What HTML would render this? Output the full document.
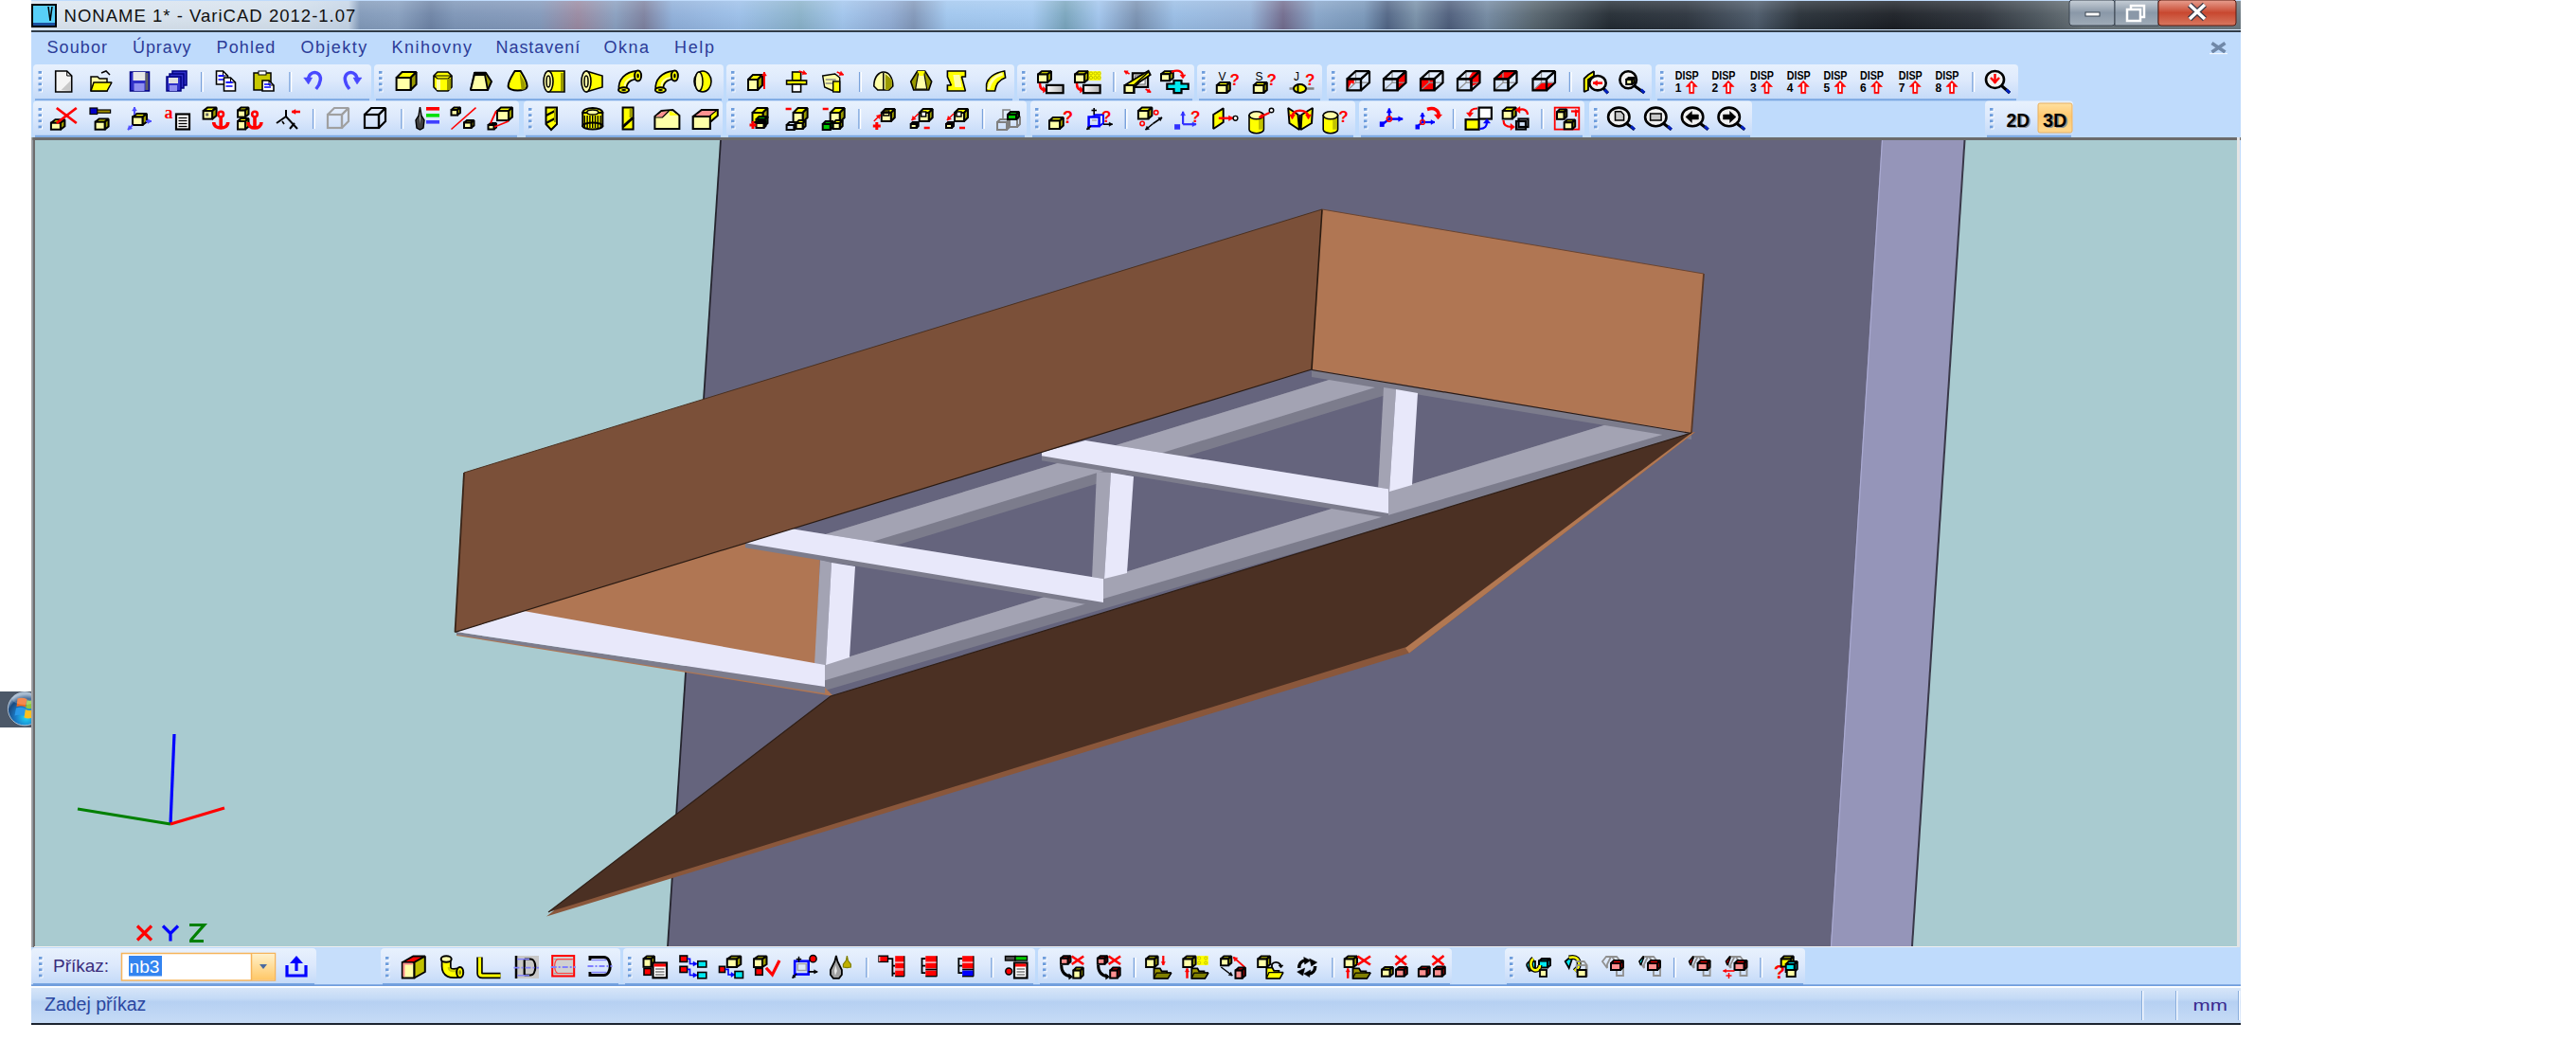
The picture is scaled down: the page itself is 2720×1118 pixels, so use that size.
<!DOCTYPE html>
<html><head><meta charset="utf-8">
<style>
html,body{margin:0;padding:0;width:2720px;height:1118px;overflow:hidden;background:#fff;font-family:"Liberation Sans",sans-serif;}
.abs{position:absolute;}
#win{position:absolute;left:33px;top:0;width:2333px;height:1082px;background:#bfdbfc;}
#title{position:absolute;left:33px;top:1px;width:2333px;height:30px;
background:linear-gradient(90deg,#dce6f0 0px,#d4e0ec 267px,#c4d4e6 335px,#8098b8 347px,#869ebe 387px,#6c82a4 422px,#7c94b6 447px,#8298ba 537px,#9888a0 577px,#889ebe 617px,#7c809e 647px,#8eaed8 677px,#9abee8 747px,#88b0c8 812px,#a0c4ec 857px,#90acd4 907px,#8096b8 932px,#a0c6ee 967px,#a2c8f0 1057px,#78a4bc 1092px,#a0c4ec 1127px,#7890b0 1167px,#98bce4 1207px,#94b2d8 1287px,#706a8c 1322px,#86a4c8 1357px,#7896b8 1407px,#506484 1432px,#7890a8 1462px,#4c5c7a 1497px,#7288a0 1537px,#56646e 1587px,#222a32 1667px,#2a323c 1747px,#4a5868 1822px,#262e36 1867px,#1a1e24 1967px,#2a3038 2057px,#48525a 2117px,#687278 2167px,#6a7880 2333px);}
#tline{position:absolute;left:33px;top:32px;width:2333px;height:2px;background:#303c48;}
#ttop{position:absolute;left:33px;top:1px;width:2333px;height:30px;background:linear-gradient(180deg,rgba(255,255,255,0.18) 0%,rgba(255,255,255,0.05) 45%,rgba(0,0,0,0.04) 100%);}
#tlight{position:absolute;left:33px;top:31px;width:2333px;height:1px;background:rgba(230,240,250,0.55);}
.t{position:absolute;white-space:pre;line-height:1;}
.menu{font-size:18px;color:#2c3c98;top:41px;}
</style></head><body>

<div id="win"></div>
<div id="title"></div><div id="ttop"></div><div id="tlight"></div><div id="tline"></div>
<svg class="abs" style="left:0;top:0" width="2720" height="1118" viewBox="0 0 2720 1118">
<defs><clipPath id="vp"><rect x="37" y="148" width="2325" height="851"/></clipPath></defs>
<rect x="33" y="145" width="2333" height="3" fill="#6b6b6b"/>
<rect x="33" y="145" width="1.6" height="856" fill="#a4a4a4"/><rect x="34.6" y="145" width="2.4" height="856" fill="#6c6c6c"/>
<rect x="2362" y="145" width="3" height="856" fill="#e4e4e4"/>
<g clip-path="url(#vp)">
<rect x="0" y="0" width="2720" height="1118" fill="#a9cbd0"/>
<polygon points="761,148 2000,148 1950,999 705,999" fill="#65647d" />
<line x1="761" y1="148" x2="705" y2="999" stroke="#25242e" stroke-width="1.8"/>
<polygon points="1987,148 2074.5,148 2019,999 1933,999" fill="#9595b9" />
<line x1="1987.5" y1="148" x2="1933.5" y2="999" stroke="#aaaad2" stroke-width="1.2"/>
<line x1="2074.5" y1="148" x2="2019" y2="999" stroke="#393848" stroke-width="2"/>
<polygon points="482,667 836,558 866,587 861,702 871,712" fill="#b07653" />
<polygon points="866,565.866 1470,380.619 1470,415.119 866,600.366" fill="#7c7c8c" />
<polygon points="866,565.866 1470,380.619 1470,403.619 866,588.866" fill="#a3a3b3" />
<polygon points="871,701.17 1786,420.539 1786,461 871,729" fill="#7c7c8c" />
<polygon points="871,701.17 1786,420.539 1786,450 871,718.17" fill="#a3a3b3" />
<polygon points="1385,390 1786,457 1786,464 1385,398" fill="#7c7c8c" />
<polygon points="1396,221 1799,289 1786,457 1385,390" fill="#b07653" />
<polyline points="1799,289 1786,457" fill="none" stroke="#5a3826" stroke-width="1.8"/>
<polyline points="1385,390.5 1786,457.5" fill="none" stroke="#2a1a14" stroke-width="1.2"/>
<polygon points="866,591 878,594 872,702 860,702" fill="#a3a3b3" />
<polygon points="878,594 903,598 897,694 872,702" fill="#e8e8fa" />
<polygon points="1158,498 1173,499 1166,611 1153,611" fill="#a3a3b3" />
<polygon points="1173,499 1197,503 1190,605 1166,611" fill="#e8e8fa" />
<polygon points="1461,409 1474,411 1467,519 1455,518" fill="#a3a3b3" />
<polygon points="1474,411 1497,415 1491,512 1467,519" fill="#e8e8fa" />
<polygon points="787,573.396 836,558.36 1165,611 1165,640.95 787,578.202" fill="#7c7c8c" />
<polygon points="787,573.396 836,558.36 1165,611 1165,635.95 787,573.202" fill="#e8e8fa" />
<polygon points="1100,477.399 1146,465 1466,516.2 1466,547.12 1100,486.364" fill="#7c7c8c" />
<polygon points="1100,477.399 1146,465 1466,516.2 1466,542.12 1100,481.364" fill="#e8e8fa" />
<polygon points="482,668 871,726 880,735 482,671" fill="#b07653" />
<polygon points="482,667 871,725 871,732 482,670" fill="#7c7c8c" />
<polygon points="482,667 553,645 871,702 871,725" fill="#e8e8fa" />
<polygon points="577,967.5 877,735 1790,456 1488,689.5" fill="#8a573b" />
<polygon points="1484,684 1786,457 1790,456 1488,689.5" fill="#b27852" />
<polygon points="579,963 877,735 1786,457 1485,683" fill="#4b3023" />
<polyline points="579,963 877,735 1786,457" fill="none" stroke="#2e1e16" stroke-width="1.2"/>
<polygon points="490,499 1396,221 1385,390 480.5,667.4" fill="#7b5039" />
<polyline points="490,499 480.5,667.4" fill="none" stroke="#3a2418" stroke-width="1.8"/>
<polyline points="1396,221 1385,390" fill="none" stroke="#2a1a10" stroke-width="1.6"/>
<polyline points="490,499 1396,221" fill="none" stroke="#4a3020" stroke-width="1"/>
<polyline points="480.5,667.4 1385,390" fill="none" stroke="#2a1a12" stroke-width="1.2"/>
<polyline points="1396,221 1799,289" fill="none" stroke="#6a4430" stroke-width="1"/>
<polyline points="180,870 184,775" stroke="#0000ff" stroke-width="3.2" fill="none"/>
<polyline points="180,870 82,854" stroke="#008000" stroke-width="3.2" fill="none"/>
<polyline points="180,870 237,853" stroke="#ff0000" stroke-width="3" fill="none"/>
</g>
<rect x="36" y="999" width="2326" height="1.5" fill="#f0f0f0"/>
<defs><linearGradient id="tbgrad" x1="0" y1="0" x2="0" y2="1"><stop offset="0" stop-color="#e8f1fd"/><stop offset="0.45" stop-color="#dde9fc"/><stop offset="1" stop-color="#c2d9f8"/></linearGradient><linearGradient id="stgrad" x1="0" y1="0" x2="0" y2="1"><stop offset="0" stop-color="#d6e5f8"/><stop offset="0.3" stop-color="#c4daf6"/><stop offset="0.4" stop-color="#b6d0f2"/><stop offset="1" stop-color="#c6dbf6"/></linearGradient><linearGradient id="btn3d" x1="0" y1="0" x2="0" y2="1"><stop offset="0" stop-color="#ffe0a0"/><stop offset="0.45" stop-color="#ffc870"/><stop offset="1" stop-color="#ffd890"/></linearGradient><linearGradient id="ddgrad" x1="0" y1="0" x2="0" y2="1"><stop offset="0" stop-color="#fff0c8"/><stop offset="1" stop-color="#ffc868"/></linearGradient><radialGradient id="orb" cx="0.55" cy="0.75" r="0.7"><stop offset="0" stop-color="#20d8f8"/><stop offset="0.45" stop-color="#1a7cc8"/><stop offset="0.8" stop-color="#1a4a80"/><stop offset="1" stop-color="#9ab0c8"/></radialGradient><linearGradient id="closebtn" x1="0" y1="0" x2="0" y2="1"><stop offset="0" stop-color="#e8a090"/><stop offset="0.5" stop-color="#c84830"/><stop offset="1" stop-color="#d87860"/></linearGradient><linearGradient id="minbtn" x1="0" y1="0" x2="0" y2="1"><stop offset="0" stop-color="#c8d0d8"/><stop offset="0.5" stop-color="#8a98a8"/><stop offset="1" stop-color="#a0acb8"/></linearGradient></defs>
<rect x="35" y="68" width="357" height="38.3" rx="4" fill="url(#tbgrad)"/><rect x="37" y="104.3" width="353" height="2" fill="#78a6e2"/><rect x="41.5" y="76" width="3.5" height="2.8" fill="#ffffff"/><rect x="40.5" y="75" width="3.5" height="2.8" fill="#6e9ddc"/><rect x="41.5" y="82.2" width="3.5" height="2.8" fill="#ffffff"/><rect x="40.5" y="81.2" width="3.5" height="2.8" fill="#6e9ddc"/><rect x="41.5" y="88.4" width="3.5" height="2.8" fill="#ffffff"/><rect x="40.5" y="87.4" width="3.5" height="2.8" fill="#6e9ddc"/><rect x="41.5" y="94.6" width="3.5" height="2.8" fill="#ffffff"/><rect x="40.5" y="93.6" width="3.5" height="2.8" fill="#6e9ddc"/><g transform="translate(55.7,74)"><polygon points="3,1 15,1 20,6 20,23 3,23" fill="#f4f4f4" stroke="#000" stroke-width="1.6" stroke-linejoin="miter" stroke-miterlimit="1.5" /><polyline points="15,1 15,6 20,6" fill="none" stroke="#000" stroke-width="1"/><polygon points="9,21 19,11 19,22" fill="#c8c8c8" stroke="none" stroke-width="0" stroke-linejoin="miter" stroke-miterlimit="1.5" /></g><g transform="translate(95,74)"><polygon points="1,7 8,7 10,9 18,9 18,22 1,22" fill="#ffffa8" stroke="#000" stroke-width="1.5" stroke-linejoin="miter" stroke-miterlimit="1.5" /><polygon points="4,13 23,13 18,22 1,22" fill="#ffff00" stroke="#000" stroke-width="1.5" stroke-linejoin="miter" stroke-miterlimit="1.5" /><polyline points="12,3 17,1 21,5" fill="none" stroke="#000" stroke-width="1.5"/></g><g transform="translate(135.5,74)"><rect x="2" y="2" width="20" height="20" fill="#3030c8" stroke="#000080" stroke-width="1.5"/><rect x="5" y="2" width="13" height="9" fill="#e8e8e8" stroke="none" stroke-width="0"/><rect x="6" y="14" width="11" height="8" fill="#9090f0" stroke="none" stroke-width="0"/><rect x="18" y="3" width="3" height="18" fill="#606060" stroke="none" stroke-width="0"/></g><g transform="translate(174,74)"><rect x="8" y="1" width="15" height="15" fill="#3030c8" stroke="#000080" stroke-width="1.5"/><rect x="5" y="4" width="15" height="15" fill="#3030c8" stroke="#000080" stroke-width="1.5"/><rect x="2" y="7" width="15" height="15" fill="#3030c8" stroke="#000080" stroke-width="1.5"/><rect x="4" y="8" width="10" height="6" fill="#e0e0e0" stroke="none" stroke-width="0"/><rect x="5" y="16" width="8" height="6" fill="#9090f0" stroke="none" stroke-width="0"/></g><rect x="211.95" y="76" width="1.5" height="21" fill="#7aa2dc"/><rect x="213.45" y="76" width="1.5" height="21" fill="#ffffff"/><g transform="translate(226.5,74)"><polygon points="2,1 9,1 14,6 14,15 2,15" fill="#fff" stroke="#000" stroke-width="1.6" stroke-linejoin="miter" stroke-miterlimit="1.5" /><polyline points="9,1 9,6 14,6" fill="none" stroke="#000" stroke-width="1"/><polyline points="4,6 10,6" fill="none" stroke="#0000ff" stroke-width="2"/><polyline points="4,10 10,10" fill="none" stroke="#0000ff" stroke-width="1.5"/><polygon points="10,8 17,8 22,13 22,22 10,22" fill="#fff" stroke="#000" stroke-width="1.6" stroke-linejoin="miter" stroke-miterlimit="1.5" /><polyline points="17,8 17,13 22,13" fill="none" stroke="#000" stroke-width="1"/><polyline points="12,13 19,13" fill="none" stroke="#0000ff" stroke-width="2"/><polyline points="12,17 19,17" fill="none" stroke="#0000ff" stroke-width="1.5"/></g><g transform="translate(266,74)"><rect x="2" y="3" width="18" height="18" fill="#c8c800" stroke="#000" stroke-width="1.5"/><rect x="7" y="1" width="8" height="4" fill="#fff" stroke="#000" stroke-width="1"/><polygon points="11,11 18,11 23,16 23,22 11,22" fill="#fff" stroke="#000" stroke-width="1.6" stroke-linejoin="miter" stroke-miterlimit="1.5" /><polyline points="18,11 18,16 23,16" fill="none" stroke="#000" stroke-width="1"/><polyline points="13,15 20,15" fill="none" stroke="#0000ff" stroke-width="1.5"/><polyline points="13,18 20,18" fill="none" stroke="#0000ff" stroke-width="1.5"/></g><rect x="305.25" y="76" width="1.5" height="21" fill="#7aa2dc"/><rect x="306.75" y="76" width="1.5" height="21" fill="#ffffff"/><g transform="translate(319.7,74)"><path d="M7 12 C4 6 10 1 15 3 C21 6 19 14 14 20" fill="none" stroke="#4848ff" stroke-width="3.5"/><polygon points="1,8 10,8 6,15" fill="#4848ff" stroke="#4848ff" stroke-width="0.5" stroke-linejoin="miter" stroke-miterlimit="1.5" /></g><g transform="translate(359,74)"><path d="M17 12 C20 6 14 1 9 3 C3 6 5 14 10 20" fill="none" stroke="#4848ff" stroke-width="3.5"/><polygon points="23,8 14,8 18,15" fill="#4848ff" stroke="#4848ff" stroke-width="0.5" stroke-linejoin="miter" stroke-miterlimit="1.5" /></g><rect x="395" y="68" width="369" height="38.3" rx="4" fill="url(#tbgrad)"/><rect x="397" y="104.3" width="365" height="2" fill="#78a6e2"/><rect x="401" y="76" width="3.5" height="2.8" fill="#ffffff"/><rect x="400" y="75" width="3.5" height="2.8" fill="#6e9ddc"/><rect x="401" y="82.2" width="3.5" height="2.8" fill="#ffffff"/><rect x="400" y="81.2" width="3.5" height="2.8" fill="#6e9ddc"/><rect x="401" y="88.4" width="3.5" height="2.8" fill="#ffffff"/><rect x="400" y="87.4" width="3.5" height="2.8" fill="#6e9ddc"/><rect x="401" y="94.6" width="3.5" height="2.8" fill="#ffffff"/><rect x="400" y="93.6" width="3.5" height="2.8" fill="#6e9ddc"/><g transform="translate(416.6,74)"><polygon points="2,8 8,2 23,2 17,8" fill="#ffff00" stroke="#000" stroke-width="2" stroke-linejoin="miter" stroke-miterlimit="1.5" /><polygon points="17,8 23,2 23,15 17,21" fill="#9a9a00" stroke="#000" stroke-width="2" stroke-linejoin="miter" stroke-miterlimit="1.5" /><rect x="2" y="8" width="15" height="13" fill="#ffffa8" stroke="#000" stroke-width="2"/></g><g transform="translate(456,74)"><polygon points="2,6 6,2 17,2 21,6 21,18 17,22 6,22 2,18" fill="#ffff00" stroke="#000" stroke-width="1.6" stroke-linejoin="miter" stroke-miterlimit="1.5" /><polygon points="2,6 6,9 17,9 21,6" fill="#ffff00" stroke="#000" stroke-width="1.2" stroke-linejoin="miter" stroke-miterlimit="1.5" /><rect x="5" y="10" width="4" height="11" fill="#ffffa8" stroke="none" stroke-width="0"/><rect x="16" y="9" width="4" height="12" fill="#9a9a00" stroke="none" stroke-width="0"/></g><g transform="translate(496,74)"><polygon points="1,21 5,3 17,3 23,12 19,21" fill="#9a9a00" stroke="#000" stroke-width="2" stroke-linejoin="miter" stroke-miterlimit="1.5" /><polygon points="1,21 5,5 16,5 19,21" fill="#ffffa8" stroke="#000" stroke-width="1.8" stroke-linejoin="miter" stroke-miterlimit="1.5" /><polyline points="5,3 17,3" fill="none" stroke="#000" stroke-width="2.5"/></g><g transform="translate(534.6,74)"><path d="M9 1 L15 1 C18 6 22 12 22 17 C22 23 2 23 2 17 C2 12 6 6 9 1 Z" fill="#ffff00" stroke="#000" stroke-width="2"/><polygon points="14,3 20,14 20,20 16,21" fill="#9a9a00" stroke="none" stroke-width="0" stroke-linejoin="miter" stroke-miterlimit="1.5" /></g><g transform="translate(573,74)"><polygon points="6,1 23,1 23,23 6,23" fill="#ffff00" stroke="#000" stroke-width="1.6" stroke-linejoin="miter" stroke-miterlimit="1.5" /><ellipse cx="6" cy="12" rx="5" ry="11" fill="#ffffa8" stroke="#000" stroke-width="1.6"/><ellipse cx="6" cy="12" rx="2" ry="6" fill="none" stroke="#000" stroke-width="1.5"/><rect x="19" y="3" width="3" height="19" fill="#9a9a00" stroke="none" stroke-width="0"/></g><g transform="translate(613,74)"><polygon points="6,1 23,6 23,18 6,23" fill="#ffff00" stroke="#000" stroke-width="1.6" stroke-linejoin="miter" stroke-miterlimit="1.5" /><ellipse cx="6" cy="12" rx="5" ry="11" fill="#ffffa8" stroke="#000" stroke-width="1.6"/><ellipse cx="6" cy="12" rx="2" ry="6" fill="none" stroke="#000" stroke-width="1.5"/></g><g transform="translate(652.6,74)"><path d="M5 21 C4 12 10 6 20 5" fill="none" stroke="#000" stroke-width="10"/><path d="M5 21 C4 12 10 6 20 5" fill="none" stroke="#ffff00" stroke-width="6.5"/><path d="M7 17 C7 12 11 9 17 8" fill="none" stroke="#ffffa8" stroke-width="2"/><ellipse cx="21" cy="6" rx="3.5" ry="5.5" fill="#ffff00" stroke="#000" stroke-width="2"/><ellipse cx="21" cy="6" rx="1.2" ry="2.5" fill="#000"/><ellipse cx="6" cy="21" rx="5.5" ry="2.8" fill="#ffff00" stroke="#000" stroke-width="2"/><ellipse cx="6" cy="21" rx="2.5" ry="1" fill="#000"/></g><g transform="translate(691.4,74)"><path d="M5 21 C4 12 10 6 20 5" fill="none" stroke="#000" stroke-width="10"/><path d="M5 21 C4 12 10 6 20 5" fill="none" stroke="#ffff00" stroke-width="6.5"/><path d="M7 17 C7 12 11 9 17 8" fill="none" stroke="#ffffa8" stroke-width="2"/><ellipse cx="21" cy="6" rx="3.5" ry="5.5" fill="#ffff00" stroke="#000" stroke-width="2"/><ellipse cx="21" cy="6" rx="1.2" ry="2.5" fill="#000"/><ellipse cx="6" cy="21" rx="5.5" ry="2.8" fill="#ffff00" stroke="#000" stroke-width="2"/><ellipse cx="6" cy="21" rx="2.5" ry="1" fill="#000"/></g><g transform="translate(730,74)"><ellipse cx="12" cy="12" rx="9" ry="11" fill="#ffff00" stroke="#000" stroke-width="1.6"/><ellipse cx="8" cy="12" rx="4" ry="10" fill="#ffffa8" stroke="#000" stroke-width="1.5"/></g><rect x="767" y="68" width="304" height="38.3" rx="4" fill="url(#tbgrad)"/><rect x="769" y="104.3" width="300" height="2" fill="#78a6e2"/><rect x="773" y="76" width="3.5" height="2.8" fill="#ffffff"/><rect x="772" y="75" width="3.5" height="2.8" fill="#6e9ddc"/><rect x="773" y="82.2" width="3.5" height="2.8" fill="#ffffff"/><rect x="772" y="81.2" width="3.5" height="2.8" fill="#6e9ddc"/><rect x="773" y="88.4" width="3.5" height="2.8" fill="#ffffff"/><rect x="772" y="87.4" width="3.5" height="2.8" fill="#6e9ddc"/><rect x="773" y="94.6" width="3.5" height="2.8" fill="#ffffff"/><rect x="772" y="93.6" width="3.5" height="2.8" fill="#6e9ddc"/><g transform="translate(788,74)"><polygon points="2,10 7,5 17,5 12,10" fill="#ffff00" stroke="#000" stroke-width="2" stroke-linejoin="miter" stroke-miterlimit="1.5" /><polygon points="12,10 17,5 17,16 12,21" fill="#9a9a00" stroke="#000" stroke-width="2" stroke-linejoin="miter" stroke-miterlimit="1.5" /><rect x="2" y="10" width="10" height="11" fill="#ffffa8" stroke="#000" stroke-width="2"/><polyline points="19,20 19,2" fill="none" stroke="#ff0000" stroke-width="2"/><polygon points="19,2 16.6,6 21.4,6" fill="#ff0000" stroke="#ff0000" stroke-width="0.5" stroke-linejoin="miter" stroke-miterlimit="1.5" /></g><g transform="translate(828.6,74)"><rect x="8" y="2" width="9" height="9" fill="#ffff00" stroke="#000" stroke-width="1.6"/><rect x="2" y="11" width="21" height="4" fill="#ffff00" stroke="#000" stroke-width="1.6"/><rect x="8" y="15" width="9" height="8" fill="#fff" stroke="#000" stroke-width="1.6"/><polyline points="15,1 23,4" fill="none" stroke="#ff0000" stroke-width="1.5"/><polygon points="23,4 20.0974,0.348316 18.412,4.8427" fill="#ff0000" stroke="#ff0000" stroke-width="0.5" stroke-linejoin="miter" stroke-miterlimit="1.5" /></g><g transform="translate(867.7,74)"><polygon points="1,6 14,4 19,8 19,23 12,22 3,18" fill="#ffffa8" stroke="#000" stroke-width="1.4" stroke-linejoin="miter" stroke-miterlimit="1.5" /><polyline points="4,10 15,10" fill="none" stroke="#888" stroke-width="1.5"/><polyline points="4,14 15,14" fill="none" stroke="#888" stroke-width="1.5"/><rect x="12" y="12" width="7" height="11" fill="#ffff00" stroke="#000" stroke-width="1.4"/><polyline points="16,2 23,5" fill="none" stroke="#ff0000" stroke-width="1.5"/><polygon points="23,5 20.2688,1.21837 18.378,5.63027" fill="#ff0000" stroke="#ff0000" stroke-width="0.5" stroke-linejoin="miter" stroke-miterlimit="1.5" /></g><rect x="906.95" y="76" width="1.5" height="21" fill="#7aa2dc"/><rect x="908.45" y="76" width="1.5" height="21" fill="#ffffff"/><g transform="translate(920.8,74)"><path d="M2 17 C2 6 8 2 12 2 C18 2 22 8 22 17 L18 21 L6 21 Z" fill="#ffffa8" stroke="#000" stroke-width="1.6"/><polyline points="12,3 12,21" fill="none" stroke="#000" stroke-width="1.5"/><polygon points="14,4 21,10 21,17 17,21 14,21" fill="#9a9a00" stroke="none" stroke-width="0" stroke-linejoin="miter" stroke-miterlimit="1.5" /></g><g transform="translate(960.7,74)"><polygon points="8,1 16,1 23,12 20,21 4,21 1,12" fill="#9a9a00" stroke="#000" stroke-width="1.6" stroke-linejoin="miter" stroke-miterlimit="1.5" /><polygon points="9,3 15,3 18,20 6,20" fill="#ffffa8" stroke="#000" stroke-width="1.2" stroke-linejoin="miter" stroke-miterlimit="1.5" /><polygon points="8,1 16,1 14,6 10,6" fill="#ffff00" stroke="none" stroke-width="0" stroke-linejoin="miter" stroke-miterlimit="1.5" /></g><g transform="translate(998.4,74)"><polygon points="2,1 21,1 21,7 17,7 21,22 2,22 2,16 6,16 2,7" fill="#ffff00" stroke="#000" stroke-width="1.6" stroke-linejoin="miter" stroke-miterlimit="1.5" /><polygon points="8,5 15,5 17,18 10,18" fill="#ffffa8" stroke="none" stroke-width="0" stroke-linejoin="miter" stroke-miterlimit="1.5" /></g><g transform="translate(1039.6,74)"><path d="M2 22 L2 15 C4 7 10 3 21 1 L22 8 C16 10 12 14 11 22 Z" fill="#ffff00" stroke="#000" stroke-width="1.6"/><path d="M4 20 C6 11 12 6 19 4" fill="none" stroke="#ffffa8" stroke-width="3"/></g><rect x="1074" y="68" width="187" height="38.3" rx="4" fill="url(#tbgrad)"/><rect x="1076" y="104.3" width="183" height="2" fill="#78a6e2"/><rect x="1080" y="76" width="3.5" height="2.8" fill="#ffffff"/><rect x="1079" y="75" width="3.5" height="2.8" fill="#6e9ddc"/><rect x="1080" y="82.2" width="3.5" height="2.8" fill="#ffffff"/><rect x="1079" y="81.2" width="3.5" height="2.8" fill="#6e9ddc"/><rect x="1080" y="88.4" width="3.5" height="2.8" fill="#ffffff"/><rect x="1079" y="87.4" width="3.5" height="2.8" fill="#6e9ddc"/><rect x="1080" y="94.6" width="3.5" height="2.8" fill="#ffffff"/><rect x="1079" y="93.6" width="3.5" height="2.8" fill="#6e9ddc"/><g transform="translate(1097,74)"><polygon points="-1,4.5 3,1.2 13,1.2 9,4.5" fill="#ffff00" stroke="#000" stroke-width="2" stroke-linejoin="miter" stroke-miterlimit="1.5" /><polygon points="9,4.5 13,1.2 13,9.7 9,13" fill="#9a9a00" stroke="#000" stroke-width="2" stroke-linejoin="miter" stroke-miterlimit="1.5" /><rect x="-1" y="4.5" width="10" height="8.5" fill="#ffffa8" stroke="#000" stroke-width="2"/><path d="M1 14 C1 19 3 21 6 21" fill="none" stroke="#ff0000" stroke-width="2.6"/><polygon points="4.5,17.5 8.5,21 4.5,24" fill="#ff0000" stroke="#ff0000" stroke-width="0.5" stroke-linejoin="miter" stroke-miterlimit="1.5" /><defs><linearGradient id="rmg" x1="0" y1="0" x2="1" y2="0"><stop offset="0" stop-color="#fff"/><stop offset="1" stop-color="#b0b0b0"/></linearGradient></defs><rect x="8" y="15.9" width="17.6" height="8.3" fill="url(#rmg)" stroke="#000" stroke-width="2.2"/></g><g transform="translate(1136,74)"><polygon points="-1,4.5 3,1.2 13,1.2 9,4.5" fill="#ffff00" stroke="#000" stroke-width="2" stroke-linejoin="miter" stroke-miterlimit="1.5" /><polygon points="9,4.5 13,1.2 13,9.7 9,13" fill="#9a9a00" stroke="#000" stroke-width="2" stroke-linejoin="miter" stroke-miterlimit="1.5" /><rect x="-1" y="4.5" width="10" height="8.5" fill="#ffffa8" stroke="#000" stroke-width="2"/><path d="M1 14 C1 19 3 21 6 21" fill="none" stroke="#ff0000" stroke-width="2.6"/><polygon points="4.5,17.5 8.5,21 4.5,24" fill="#ff0000" stroke="#ff0000" stroke-width="0.5" stroke-linejoin="miter" stroke-miterlimit="1.5" /><defs><linearGradient id="rmg" x1="0" y1="0" x2="1" y2="0"><stop offset="0" stop-color="#fff"/><stop offset="1" stop-color="#b0b0b0"/></linearGradient></defs><rect x="8" y="15.9" width="17.6" height="8.3" fill="url(#rmg)" stroke="#000" stroke-width="2.2"/><rect x="13.5" y="1.2" width="13" height="9.8" fill="#ffff00" stroke="none" stroke-width="0"/><circle cx="16" cy="3.5" r="1.6" fill="none" stroke="#c0c000" stroke-width="1"/><circle cx="16" cy="8" r="1.6" fill="none" stroke="#c0c000" stroke-width="1"/><circle cx="20.5" cy="3.5" r="1.6" fill="none" stroke="#c0c000" stroke-width="1"/><circle cx="20.5" cy="8" r="1.6" fill="none" stroke="#c0c000" stroke-width="1"/><circle cx="24.5" cy="3.5" r="1.6" fill="none" stroke="#c0c000" stroke-width="1"/><circle cx="24.5" cy="8" r="1.6" fill="none" stroke="#c0c000" stroke-width="1"/></g><rect x="1175.25" y="76" width="1.5" height="21" fill="#7aa2dc"/><rect x="1176.75" y="76" width="1.5" height="21" fill="#ffffff"/><g transform="translate(1188.6,74)"><rect x="7.3" y="3.3" width="16.2" height="14.6" fill="#d8d8d8" stroke="#000" stroke-width="2.2"/><rect x="10" y="6" width="10.5" height="9" fill="#ffffff" stroke="#606060" stroke-width="1"/><polygon points="-1,16 12,8 24,1 26,5 14,13 9,18 9,24 -1,24" fill="#ffff00" stroke="#000" stroke-width="2" stroke-linejoin="miter" stroke-miterlimit="1.5" /><rect x="-1" y="16" width="9.5" height="8" fill="#ffffa8" stroke="#000" stroke-width="2"/><polyline points="8.5,16 24,2" fill="none" stroke="#000" stroke-width="1.5"/><polyline points="4,4 -1.5,1" fill="none" stroke="#ff0000" stroke-width="1.8"/><polygon points="-1.5,1 0.567045,4.51956 2.57822,0.832402" fill="#ff0000" stroke="#ff0000" stroke-width="0.5" stroke-linejoin="miter" stroke-miterlimit="1.5" /><polyline points="21,20 26.5,23.5" fill="none" stroke="#ff0000" stroke-width="1.8"/><polygon points="26.5,23.5 24.6746,19.8492 22.4197,23.3926" fill="#ff0000" stroke="#ff0000" stroke-width="0.5" stroke-linejoin="miter" stroke-miterlimit="1.5" /></g><g transform="translate(1229,74)"><polygon points="-3,4.2 0.8,1.2 9.8,1.2 6,4.2" fill="#ffff00" stroke="#000" stroke-width="2" stroke-linejoin="miter" stroke-miterlimit="1.5" /><polygon points="6,4.2 9.8,1.2 9.8,8.2 6,11.2" fill="#9a9a00" stroke="#000" stroke-width="2" stroke-linejoin="miter" stroke-miterlimit="1.5" /><rect x="-3" y="4.2" width="9" height="7" fill="#ffffa8" stroke="#000" stroke-width="2"/><path d="M8 2 C13 0 18 0 20 5" fill="none" stroke="#ff0000" stroke-width="2.2"/><polygon points="17,5 23,5 20,9" fill="#ff0000" stroke="#ff0000" stroke-width="0.5" stroke-linejoin="miter" stroke-miterlimit="1.5" /><polygon points="10.5,11 18.5,11 18.5,14.5 25.7,14.5 25.7,20 18.5,20 18.5,24.2 10.5,24.2 10.5,20 3.3,20 3.3,14.5 10.5,14.5" fill="#00e8f0" stroke="#000" stroke-width="2.2" stroke-linejoin="miter" stroke-miterlimit="1.5" /></g><rect x="1264" y="68" width="132" height="38.3" rx="4" fill="url(#tbgrad)"/><rect x="1266" y="104.3" width="128" height="2" fill="#78a6e2"/><rect x="1270" y="76" width="3.5" height="2.8" fill="#ffffff"/><rect x="1269" y="75" width="3.5" height="2.8" fill="#6e9ddc"/><rect x="1270" y="82.2" width="3.5" height="2.8" fill="#ffffff"/><rect x="1269" y="81.2" width="3.5" height="2.8" fill="#6e9ddc"/><rect x="1270" y="88.4" width="3.5" height="2.8" fill="#ffffff"/><rect x="1269" y="87.4" width="3.5" height="2.8" fill="#6e9ddc"/><rect x="1270" y="94.6" width="3.5" height="2.8" fill="#ffffff"/><rect x="1269" y="93.6" width="3.5" height="2.8" fill="#6e9ddc"/><g transform="translate(1283,74)"><text x="3.5" y="10.5" font-family="Liberation Sans" font-size="12" font-weight="normal" fill="#000">V</text><polygon points="1.8,16 5.3,13 15.8,13 12.3,16" fill="#ffff00" stroke="#000" stroke-width="2" stroke-linejoin="miter" stroke-miterlimit="1.5" /><polygon points="12.3,16 15.8,13 15.8,21 12.3,24" fill="#9a9a00" stroke="#000" stroke-width="2" stroke-linejoin="miter" stroke-miterlimit="1.5" /><rect x="1.8" y="16" width="10.5" height="8" fill="#ffffa8" stroke="#000" stroke-width="2"/><text x="15.5" y="15.5" font-family="Liberation Sans" font-size="17" font-weight="bold" fill="#ff0000">?</text></g><g transform="translate(1322,74)"><text x="3.5" y="10.5" font-family="Liberation Sans" font-size="12" font-weight="normal" fill="#000">S</text><polygon points="1.8,16 5.3,13 15.8,13 12.3,16" fill="#ffff00" stroke="#000" stroke-width="2" stroke-linejoin="miter" stroke-miterlimit="1.5" /><polygon points="12.3,16 15.8,13 15.8,21 12.3,24" fill="#9a9a00" stroke="#000" stroke-width="2" stroke-linejoin="miter" stroke-miterlimit="1.5" /><rect x="1.8" y="16" width="10.5" height="8" fill="#ffffa8" stroke="#000" stroke-width="2"/><text x="15.5" y="15.5" font-family="Liberation Sans" font-size="17" font-weight="bold" fill="#ff0000">?</text></g><g transform="translate(1362.5,74)"><text x="3.5" y="10.5" font-family="Liberation Sans" font-size="12" font-weight="normal" fill="#000">J</text><polyline points="-1,19.5 25,19.5" fill="none" stroke="#808080" stroke-width="2.5"/><ellipse cx="10" cy="19.5" rx="6.5" ry="4.5" fill="#ffff00" stroke="#000" stroke-width="2"/><polyline points="8,16 8,23" fill="none" stroke="#000" stroke-width="1.8"/><text x="15.5" y="15.5" font-family="Liberation Sans" font-size="17" font-weight="bold" fill="#ff0000">?</text></g><rect x="1401" y="68" width="343" height="38.3" rx="4" fill="url(#tbgrad)"/><rect x="1403" y="104.3" width="339" height="2" fill="#78a6e2"/><rect x="1407" y="76" width="3.5" height="2.8" fill="#ffffff"/><rect x="1406" y="75" width="3.5" height="2.8" fill="#6e9ddc"/><rect x="1407" y="82.2" width="3.5" height="2.8" fill="#ffffff"/><rect x="1406" y="81.2" width="3.5" height="2.8" fill="#6e9ddc"/><rect x="1407" y="88.4" width="3.5" height="2.8" fill="#ffffff"/><rect x="1406" y="87.4" width="3.5" height="2.8" fill="#6e9ddc"/><rect x="1407" y="94.6" width="3.5" height="2.8" fill="#ffffff"/><rect x="1406" y="93.6" width="3.5" height="2.8" fill="#6e9ddc"/><g transform="translate(1421.5,74)"><polygon points="1,9.4 8.25,9.4 8.25,15.4 5.5,13.2 1,21.4" fill="#ff0000" stroke="none" stroke-width="0" stroke-linejoin="miter" stroke-miterlimit="1.5" /><polyline points="10,1.2 10,13.2 1,21.4" fill="none" stroke="#909090" stroke-width="1.3"/><polyline points="10,13.2 24.5,13.2" fill="none" stroke="#909090" stroke-width="1.3"/><polygon points="1,9.4 10,1.2 24.5,1.2 15.5,9.4" fill="none" stroke="#000" stroke-width="2.2" stroke-linejoin="miter" stroke-miterlimit="1.5" /><polygon points="15.5,9.4 24.5,1.2 24.5,13.2 15.5,21.4" fill="none" stroke="#000" stroke-width="2.2" stroke-linejoin="miter" stroke-miterlimit="1.5" /><polygon points="1,9.4 15.5,9.4 15.5,21.4 1,21.4" fill="none" stroke="#000" stroke-width="2.2" stroke-linejoin="miter" stroke-miterlimit="1.5" /></g><g transform="translate(1460,74)"><polygon points="15.5,9.4 24.5,1.2 24.5,13.2 15.5,21.4" fill="#ff0000" stroke="none" stroke-width="0" stroke-linejoin="miter" stroke-miterlimit="1.5" /><polyline points="10,1.2 10,13.2 1,21.4" fill="none" stroke="#909090" stroke-width="1.3"/><polyline points="10,13.2 24.5,13.2" fill="none" stroke="#909090" stroke-width="1.3"/><polygon points="1,9.4 10,1.2 24.5,1.2 15.5,9.4" fill="none" stroke="#000" stroke-width="2.2" stroke-linejoin="miter" stroke-miterlimit="1.5" /><polygon points="15.5,9.4 24.5,1.2 24.5,13.2 15.5,21.4" fill="none" stroke="#000" stroke-width="2.2" stroke-linejoin="miter" stroke-miterlimit="1.5" /><polygon points="1,9.4 15.5,9.4 15.5,21.4 1,21.4" fill="none" stroke="#000" stroke-width="2.2" stroke-linejoin="miter" stroke-miterlimit="1.5" /></g><g transform="translate(1499,74)"><polygon points="1,9.4 15.5,9.4 15.5,21.4 1,21.4" fill="#ff0000" stroke="none" stroke-width="0" stroke-linejoin="miter" stroke-miterlimit="1.5" /><polyline points="10,1.2 10,13.2 1,21.4" fill="none" stroke="#909090" stroke-width="1.3"/><polyline points="10,13.2 24.5,13.2" fill="none" stroke="#909090" stroke-width="1.3"/><polygon points="1,9.4 10,1.2 24.5,1.2 15.5,9.4" fill="none" stroke="#000" stroke-width="2.2" stroke-linejoin="miter" stroke-miterlimit="1.5" /><polygon points="15.5,9.4 24.5,1.2 24.5,13.2 15.5,21.4" fill="none" stroke="#000" stroke-width="2.2" stroke-linejoin="miter" stroke-miterlimit="1.5" /><polygon points="1,9.4 15.5,9.4 15.5,21.4 1,21.4" fill="none" stroke="#000" stroke-width="2.2" stroke-linejoin="miter" stroke-miterlimit="1.5" /></g><g transform="translate(1538,74)"><polygon points="17.25,1.2 24.5,1.2 24.5,13.2 15.5,17.3 12.75,8.4" fill="#ff0000" stroke="none" stroke-width="0" stroke-linejoin="miter" stroke-miterlimit="1.5" /><polyline points="10,1.2 10,13.2 1,21.4" fill="none" stroke="#909090" stroke-width="1.3"/><polyline points="10,13.2 24.5,13.2" fill="none" stroke="#909090" stroke-width="1.3"/><polygon points="1,9.4 10,1.2 24.5,1.2 15.5,9.4" fill="none" stroke="#000" stroke-width="2.2" stroke-linejoin="miter" stroke-miterlimit="1.5" /><polygon points="15.5,9.4 24.5,1.2 24.5,13.2 15.5,21.4" fill="none" stroke="#000" stroke-width="2.2" stroke-linejoin="miter" stroke-miterlimit="1.5" /><polygon points="1,9.4 15.5,9.4 15.5,21.4 1,21.4" fill="none" stroke="#000" stroke-width="2.2" stroke-linejoin="miter" stroke-miterlimit="1.5" /></g><g transform="translate(1577,74)"><polygon points="1,9.4 10,1.2 24.5,1.2 15.5,9.4" fill="#ff0000" stroke="none" stroke-width="0" stroke-linejoin="miter" stroke-miterlimit="1.5" /><polyline points="10,1.2 10,13.2 1,21.4" fill="none" stroke="#909090" stroke-width="1.3"/><polyline points="10,13.2 24.5,13.2" fill="none" stroke="#909090" stroke-width="1.3"/><polygon points="1,9.4 10,1.2 24.5,1.2 15.5,9.4" fill="none" stroke="#000" stroke-width="2.2" stroke-linejoin="miter" stroke-miterlimit="1.5" /><polygon points="15.5,9.4 24.5,1.2 24.5,13.2 15.5,21.4" fill="none" stroke="#000" stroke-width="2.2" stroke-linejoin="miter" stroke-miterlimit="1.5" /><polygon points="1,9.4 15.5,9.4 15.5,21.4 1,21.4" fill="none" stroke="#000" stroke-width="2.2" stroke-linejoin="miter" stroke-miterlimit="1.5" /></g><g transform="translate(1617.5,74)"><polygon points="1,21.4 10,13.2 24.5,13.2 15.5,21.4" fill="#ff0000" stroke="none" stroke-width="0" stroke-linejoin="miter" stroke-miterlimit="1.5" /><polyline points="10,1.2 10,13.2 1,21.4" fill="none" stroke="#909090" stroke-width="1.3"/><polyline points="10,13.2 24.5,13.2" fill="none" stroke="#909090" stroke-width="1.3"/><polygon points="1,9.4 10,1.2 24.5,1.2 15.5,9.4" fill="none" stroke="#000" stroke-width="2.2" stroke-linejoin="miter" stroke-miterlimit="1.5" /><polygon points="15.5,9.4 24.5,1.2 24.5,13.2 15.5,21.4" fill="none" stroke="#000" stroke-width="2.2" stroke-linejoin="miter" stroke-miterlimit="1.5" /><polygon points="1,9.4 15.5,9.4 15.5,21.4 1,21.4" fill="none" stroke="#000" stroke-width="2.2" stroke-linejoin="miter" stroke-miterlimit="1.5" /></g><rect x="1656.75" y="76" width="1.5" height="21" fill="#7aa2dc"/><rect x="1658.25" y="76" width="1.5" height="21" fill="#ffffff"/><g transform="translate(1672,74)"><polygon points="0.7,23 0.7,9 5,5 11,1.2 11,6 5,10 5,21" fill="#ffff00" stroke="#000" stroke-width="1.8" stroke-linejoin="miter" stroke-miterlimit="1.5" /><line x1="20.22" y1="18.32" x2="25.8" y2="24.3" stroke="#000" stroke-width="3.2"/><line x1="22.3" y1="20.8" x2="25.8" y2="24.3" stroke="#0020c0" stroke-width="3"/><ellipse cx="15" cy="13.7" rx="8.7" ry="7.7" fill="#f2f2f2" stroke="#000" stroke-width="2.6"/><polyline points="20,13.7 10,13.7" fill="none" stroke="#ff0000" stroke-width="2.6"/><polygon points="10,13.7 14.5,16.4 14.5,11" fill="#ff0000" stroke="#ff0000" stroke-width="0.5" stroke-linejoin="miter" stroke-miterlimit="1.5" /></g><g transform="translate(1710.7,74)"><line x1="13.78" y1="15.7" x2="25.6" y2="24" stroke="#000" stroke-width="3.2"/><line x1="22.1" y1="20.5" x2="25.6" y2="24" stroke="#0020c0" stroke-width="3"/><ellipse cx="8.5" cy="10.3" rx="8.8" ry="9" fill="#f2f2f2" stroke="#000" stroke-width="2.6"/><polygon points="6.5,10 9,8 15,8 12.5,10" fill="#ffff00" stroke="#000" stroke-width="2" stroke-linejoin="miter" stroke-miterlimit="1.5" /><polygon points="12.5,10 15,8 15,13 12.5,15" fill="#9a9a00" stroke="#000" stroke-width="2" stroke-linejoin="miter" stroke-miterlimit="1.5" /><rect x="6.5" y="10" width="6" height="5" fill="#ffffa8" stroke="#000" stroke-width="2"/></g><rect x="1748" y="68" width="383" height="38.3" rx="4" fill="url(#tbgrad)"/><rect x="1750" y="104.3" width="379" height="2" fill="#78a6e2"/><rect x="1754" y="76" width="3.5" height="2.8" fill="#ffffff"/><rect x="1753" y="75" width="3.5" height="2.8" fill="#6e9ddc"/><rect x="1754" y="82.2" width="3.5" height="2.8" fill="#ffffff"/><rect x="1753" y="81.2" width="3.5" height="2.8" fill="#6e9ddc"/><rect x="1754" y="88.4" width="3.5" height="2.8" fill="#ffffff"/><rect x="1753" y="87.4" width="3.5" height="2.8" fill="#6e9ddc"/><rect x="1754" y="94.6" width="3.5" height="2.8" fill="#ffffff"/><rect x="1753" y="93.6" width="3.5" height="2.8" fill="#6e9ddc"/><g transform="translate(1769.7,74)"><text x="-1" y="9.8" font-family="Liberation Sans" font-weight="bold" font-size="12" textLength="25" lengthAdjust="spacingAndGlyphs" fill="#000">DISP</text><text x="-1" y="23" font-family="Liberation Sans" font-size="12" font-weight="bold" fill="#000">1</text><polygon points="16.5,11.2 10.5,17.5 14,17.5 14,24.7 19,24.7 19,17.5 22.5,17.5" fill="#ff0000" stroke="#ff0000" stroke-width="0.6" stroke-linejoin="miter" stroke-miterlimit="1.5" /><polyline points="16.5,14 16.5,23" fill="none" stroke="#fff" stroke-width="2.2"/></g><g transform="translate(1808.5,74)"><text x="-1" y="9.8" font-family="Liberation Sans" font-weight="bold" font-size="12" textLength="25" lengthAdjust="spacingAndGlyphs" fill="#000">DISP</text><text x="-1" y="23" font-family="Liberation Sans" font-size="12" font-weight="bold" fill="#000">2</text><polygon points="16.5,11.2 10.5,17.5 14,17.5 14,24.7 19,24.7 19,17.5 22.5,17.5" fill="#ff0000" stroke="#ff0000" stroke-width="0.6" stroke-linejoin="miter" stroke-miterlimit="1.5" /><polyline points="16.5,14 16.5,23" fill="none" stroke="#fff" stroke-width="2.2"/></g><g transform="translate(1849,74)"><text x="-1" y="9.8" font-family="Liberation Sans" font-weight="bold" font-size="12" textLength="25" lengthAdjust="spacingAndGlyphs" fill="#000">DISP</text><text x="-1" y="23" font-family="Liberation Sans" font-size="12" font-weight="bold" fill="#000">3</text><polygon points="16.5,11.2 10.5,17.5 14,17.5 14,24.7 19,24.7 19,17.5 22.5,17.5" fill="#ff0000" stroke="#ff0000" stroke-width="0.6" stroke-linejoin="miter" stroke-miterlimit="1.5" /><polyline points="16.5,14 16.5,23" fill="none" stroke="#fff" stroke-width="2.2"/></g><g transform="translate(1887.7,74)"><text x="-1" y="9.8" font-family="Liberation Sans" font-weight="bold" font-size="12" textLength="25" lengthAdjust="spacingAndGlyphs" fill="#000">DISP</text><text x="-1" y="23" font-family="Liberation Sans" font-size="12" font-weight="bold" fill="#000">4</text><polygon points="16.5,11.2 10.5,17.5 14,17.5 14,24.7 19,24.7 19,17.5 22.5,17.5" fill="#ff0000" stroke="#ff0000" stroke-width="0.6" stroke-linejoin="miter" stroke-miterlimit="1.5" /><polyline points="16.5,14 16.5,23" fill="none" stroke="#fff" stroke-width="2.2"/></g><g transform="translate(1926.5,74)"><text x="-1" y="9.8" font-family="Liberation Sans" font-weight="bold" font-size="12" textLength="25" lengthAdjust="spacingAndGlyphs" fill="#000">DISP</text><text x="-1" y="23" font-family="Liberation Sans" font-size="12" font-weight="bold" fill="#000">5</text><polygon points="16.5,11.2 10.5,17.5 14,17.5 14,24.7 19,24.7 19,17.5 22.5,17.5" fill="#ff0000" stroke="#ff0000" stroke-width="0.6" stroke-linejoin="miter" stroke-miterlimit="1.5" /><polyline points="16.5,14 16.5,23" fill="none" stroke="#fff" stroke-width="2.2"/></g><g transform="translate(1965,74)"><text x="-1" y="9.8" font-family="Liberation Sans" font-weight="bold" font-size="12" textLength="25" lengthAdjust="spacingAndGlyphs" fill="#000">DISP</text><text x="-1" y="23" font-family="Liberation Sans" font-size="12" font-weight="bold" fill="#000">6</text><polygon points="16.5,11.2 10.5,17.5 14,17.5 14,24.7 19,24.7 19,17.5 22.5,17.5" fill="#ff0000" stroke="#ff0000" stroke-width="0.6" stroke-linejoin="miter" stroke-miterlimit="1.5" /><polyline points="16.5,14 16.5,23" fill="none" stroke="#fff" stroke-width="2.2"/></g><g transform="translate(2005.7,74)"><text x="-1" y="9.8" font-family="Liberation Sans" font-weight="bold" font-size="12" textLength="25" lengthAdjust="spacingAndGlyphs" fill="#000">DISP</text><text x="-1" y="23" font-family="Liberation Sans" font-size="12" font-weight="bold" fill="#000">7</text><polygon points="16.5,11.2 10.5,17.5 14,17.5 14,24.7 19,24.7 19,17.5 22.5,17.5" fill="#ff0000" stroke="#ff0000" stroke-width="0.6" stroke-linejoin="miter" stroke-miterlimit="1.5" /><polyline points="16.5,14 16.5,23" fill="none" stroke="#fff" stroke-width="2.2"/></g><g transform="translate(2044.5,74)"><text x="-1" y="9.8" font-family="Liberation Sans" font-weight="bold" font-size="12" textLength="25" lengthAdjust="spacingAndGlyphs" fill="#000">DISP</text><text x="-1" y="23" font-family="Liberation Sans" font-size="12" font-weight="bold" fill="#000">8</text><polygon points="16.5,11.2 10.5,17.5 14,17.5 14,24.7 19,24.7 19,17.5 22.5,17.5" fill="#ff0000" stroke="#ff0000" stroke-width="0.6" stroke-linejoin="miter" stroke-miterlimit="1.5" /><polyline points="16.5,14 16.5,23" fill="none" stroke="#fff" stroke-width="2.2"/></g><rect x="2082.25" y="76" width="1.5" height="21" fill="#7aa2dc"/><rect x="2083.75" y="76" width="1.5" height="21" fill="#ffffff"/><g transform="translate(2097,74)"><line x1="15.2" y1="15.4" x2="25" y2="24" stroke="#000" stroke-width="3.2"/><line x1="21.5" y1="20.5" x2="25" y2="24" stroke="#0020c0" stroke-width="3"/><ellipse cx="9.5" cy="10" rx="9.5" ry="9" fill="#f2f2f2" stroke="#000" stroke-width="2.6"/><polyline points="5,8 9.5,13 14,8" fill="none" stroke="#ff0000" stroke-width="2.5"/><polyline points="9.5,4 9.5,14" fill="none" stroke="#ff0000" stroke-width="2.5"/></g>
<rect x="35" y="106.5" width="513" height="38.3" rx="4" fill="url(#tbgrad)"/><rect x="37" y="142.8" width="509" height="2" fill="#78a6e2"/><rect x="41.5" y="115" width="3.5" height="2.8" fill="#ffffff"/><rect x="40.5" y="114" width="3.5" height="2.8" fill="#6e9ddc"/><rect x="41.5" y="121.2" width="3.5" height="2.8" fill="#ffffff"/><rect x="40.5" y="120.2" width="3.5" height="2.8" fill="#6e9ddc"/><rect x="41.5" y="127.4" width="3.5" height="2.8" fill="#ffffff"/><rect x="40.5" y="126.4" width="3.5" height="2.8" fill="#6e9ddc"/><rect x="41.5" y="133.6" width="3.5" height="2.8" fill="#ffffff"/><rect x="40.5" y="132.6" width="3.5" height="2.8" fill="#6e9ddc"/><g transform="translate(54.8,113)"><polygon points="-0.9,16.7 3.6,13.2 13.6,13.2 9.1,16.7" fill="#ffff00" stroke="#000" stroke-width="2" stroke-linejoin="miter" stroke-miterlimit="1.5" /><polygon points="9.1,16.7 13.6,13.2 13.6,20.2 9.1,23.7" fill="#9a9a00" stroke="#000" stroke-width="2" stroke-linejoin="miter" stroke-miterlimit="1.5" /><rect x="-0.9" y="16.7" width="10" height="7" fill="#ffffa8" stroke="#000" stroke-width="2"/><polyline points="5,1 26,17" fill="none" stroke="#ff0000" stroke-width="2.8"/><polyline points="5,17 26,1" fill="none" stroke="#ff0000" stroke-width="2.8"/></g><g transform="translate(93.6,113)"><rect x="1.4" y="1" width="7.7" height="6.5" fill="#0000c8" stroke="#000" stroke-width="1.2"/><rect x="9.1" y="3" width="13.9" height="3.2" fill="#a09000" stroke="#000" stroke-width="1.2"/><polygon points="7,15.7 11,12.5 21,12.5 17,15.7" fill="#ffff00" stroke="#000" stroke-width="2" stroke-linejoin="miter" stroke-miterlimit="1.5" /><polygon points="17,15.7 21,12.5 21,20.5 17,23.7" fill="#9a9a00" stroke="#000" stroke-width="2" stroke-linejoin="miter" stroke-miterlimit="1.5" /><rect x="7" y="15.7" width="10" height="8" fill="#ffffa8" stroke="#000" stroke-width="2"/></g><g transform="translate(134,113)"><polygon points="6,10.5 10.5,7 21,7 16.5,10.5" fill="#ffff00" stroke="#000" stroke-width="2" stroke-linejoin="miter" stroke-miterlimit="1.5" /><polygon points="16.5,10.5 21,7 21,15.5 16.5,19" fill="#9a9a00" stroke="#000" stroke-width="2" stroke-linejoin="miter" stroke-miterlimit="1.5" /><rect x="6" y="10.5" width="10.5" height="8.5" fill="#ffffa8" stroke="#000" stroke-width="2"/><polyline points="8,8 8,0" fill="none" stroke="#5050ff" stroke-width="2"/><polygon points="8,0 5.6,4 10.4,4" fill="#5050ff" stroke="#5050ff" stroke-width="0.5" stroke-linejoin="miter" stroke-miterlimit="1.5" /><polyline points="20,15 26,15" fill="none" stroke="#5050ff" stroke-width="2"/><polygon points="26,15 22,12.6 22,17.4" fill="#5050ff" stroke="#5050ff" stroke-width="0.5" stroke-linejoin="miter" stroke-miterlimit="1.5" /><polyline points="6,19 1,24" fill="none" stroke="#5050ff" stroke-width="2"/><polygon points="1,24 5.52548,22.8686 2.13137,19.4745" fill="#5050ff" stroke="#5050ff" stroke-width="0.5" stroke-linejoin="miter" stroke-miterlimit="1.5" /></g><g transform="translate(174,113)"><text x="-0.5" y="11.5" font-family="Liberation Serif" font-size="18" font-weight="bold" fill="#ff0000">a</text><rect x="12" y="7.5" width="14" height="16" fill="#fff" stroke="#000" stroke-width="2.2"/><polyline points="14.5,11.5 23.5,11.5" fill="none" stroke="#000" stroke-width="1.3"/><polyline points="14.5,14.5 23.5,14.5" fill="none" stroke="#000" stroke-width="1.3"/><polyline points="14.5,17.5 23.5,17.5" fill="none" stroke="#000" stroke-width="1.3"/><polyline points="14.5,20.5 23.5,20.5" fill="none" stroke="#000" stroke-width="1.3"/></g><g transform="translate(214.7,113)"><polygon points="-0.1,4.1 4.4,0.6 13.9,0.6 9.4,4.1" fill="#ffff00" stroke="#000" stroke-width="2" stroke-linejoin="miter" stroke-miterlimit="1.5" /><polygon points="9.4,4.1 13.9,0.6 13.9,9.1 9.4,12.6" fill="#9a9a00" stroke="#000" stroke-width="2" stroke-linejoin="miter" stroke-miterlimit="1.5" /><rect x="-0.1" y="4.1" width="9.5" height="8.5" fill="#ffffa8" stroke="#000" stroke-width="2"/><rect x="2.5" y="6.5" width="3" height="3" fill="#606060" stroke="none" stroke-width="0"/><path d="M18.5 9 L18.5 23 M11 16 C11 24 26 24 26 16" fill="none" stroke="#ff0000" stroke-width="3.6"/><circle cx="18.5" cy="7.5" r="2.8" fill="none" stroke="#ff0000" stroke-width="2.6"/></g><g transform="translate(252,113)"><polygon points="-1,3.6 2.5,0.6 10.5,0.6 7,3.6" fill="#ffff00" stroke="#000" stroke-width="2" stroke-linejoin="miter" stroke-miterlimit="1.5" /><polygon points="7,3.6 10.5,0.6 10.5,7.6 7,10.6" fill="#9a9a00" stroke="#000" stroke-width="2" stroke-linejoin="miter" stroke-miterlimit="1.5" /><rect x="-1" y="3.6" width="8" height="7" fill="#ffffa8" stroke="#000" stroke-width="2"/><polygon points="-1,15 2.5,12 10.5,12 7,15" fill="#ffff00" stroke="#000" stroke-width="2" stroke-linejoin="miter" stroke-miterlimit="1.5" /><polygon points="7,15 10.5,12 10.5,20.5 7,23.5" fill="#9a9a00" stroke="#000" stroke-width="2" stroke-linejoin="miter" stroke-miterlimit="1.5" /><rect x="-1" y="15" width="8" height="8.5" fill="#ffffa8" stroke="#000" stroke-width="2"/><path d="M17 9 L17 23 M10 16 C10 24 24 24 24 16" fill="none" stroke="#ff0000" stroke-width="3.6"/><circle cx="17" cy="7.5" r="2.8" fill="none" stroke="#ff0000" stroke-width="2.6"/></g><g transform="translate(292,113)"><polyline points="0,17 10,10 22,23" fill="none" stroke="#000" stroke-width="2"/><polyline points="10,3 10,11" fill="none" stroke="#000" stroke-width="2"/><polyline points="14,23 19,17" fill="none" stroke="#000" stroke-width="2"/><polyline points="25,5 16,5" fill="none" stroke="#ff0000" stroke-width="2.5"/><polygon points="16,5 20,7.4 20,2.6" fill="#ff0000" stroke="#ff0000" stroke-width="0.5" stroke-linejoin="miter" stroke-miterlimit="1.5" /><polyline points="6,15 8,18" fill="none" stroke="#000" stroke-width="1.6"/></g><rect x="329.95" y="115" width="1.5" height="21" fill="#7aa2dc"/><rect x="331.45" y="115" width="1.5" height="21" fill="#ffffff"/><g transform="translate(345,113)"><polygon points="1,8 8,1 23,1 16,8" fill="none" stroke="#a0a0a0" stroke-width="2.2" stroke-linejoin="miter" stroke-miterlimit="1.5" /><polygon points="16,8 23,1 23,15 16,22" fill="none" stroke="#a0a0a0" stroke-width="2.2" stroke-linejoin="miter" stroke-miterlimit="1.5" /><rect x="1" y="8" width="15" height="14" fill="none" stroke="#a0a0a0" stroke-width="2.2"/></g><g transform="translate(384,113)"><polygon points="1,8 8,1 23,1 16,8" fill="none" stroke="#000" stroke-width="2.2" stroke-linejoin="miter" stroke-miterlimit="1.5" /><polygon points="16,8 23,1 23,15 16,22" fill="none" stroke="#000" stroke-width="2.2" stroke-linejoin="miter" stroke-miterlimit="1.5" /><rect x="1" y="8" width="15" height="14" fill="none" stroke="#000" stroke-width="2.2"/></g><rect x="423.25" y="115" width="1.5" height="21" fill="#7aa2dc"/><rect x="424.75" y="115" width="1.5" height="21" fill="#ffffff"/><g transform="translate(438,113)"><polygon points="5.5,0 7,9 10,14 9,22 5.5,24 2,22 1,14 4,9" fill="#404040" stroke="#000" stroke-width="1.4" stroke-linejoin="miter" stroke-miterlimit="1.5" /><polygon points="5.5,2 6,12 5,18" fill="#e0e0e0" stroke="none" stroke-width="0" stroke-linejoin="miter" stroke-miterlimit="1.5" /><rect x="12" y="0" width="14" height="3.6" fill="#ff0000" stroke="none" stroke-width="0"/><rect x="12" y="7" width="14" height="3.6" fill="#00e000" stroke="none" stroke-width="0"/><rect x="12" y="14" width="14" height="3.6" fill="#4040ff" stroke="none" stroke-width="0"/></g><g transform="translate(477,113)"><polygon points="-0.5,3.1 2.5,0.6 9,0.6 6,3.1" fill="#ffff00" stroke="#000" stroke-width="2" stroke-linejoin="miter" stroke-miterlimit="1.5" /><polygon points="6,3.1 9,0.6 9,6.1 6,8.6" fill="#9a9a00" stroke="#000" stroke-width="2" stroke-linejoin="miter" stroke-miterlimit="1.5" /><rect x="-0.5" y="3.1" width="6.5" height="5.5" fill="#ffffa8" stroke="#000" stroke-width="2"/><polygon points="13,16.5 16,14 23.5,14 20.5,16.5" fill="#ffff00" stroke="#000" stroke-width="2" stroke-linejoin="miter" stroke-miterlimit="1.5" /><polygon points="20.5,16.5 23.5,14 23.5,19.5 20.5,22" fill="#9a9a00" stroke="#000" stroke-width="2" stroke-linejoin="miter" stroke-miterlimit="1.5" /><rect x="13" y="16.5" width="7.5" height="5.5" fill="#ffffa8" stroke="#000" stroke-width="2"/><polyline points="-0.5,23.5 25.5,0.6" fill="none" stroke="#ff0000" stroke-width="1.6"/></g><g transform="translate(516,113)"><polygon points="9,4.1 13,0.6 25,0.6 21,4.1" fill="#ffff00" stroke="#000" stroke-width="2" stroke-linejoin="miter" stroke-miterlimit="1.5" /><polygon points="21,4.1 25,0.6 25,10.6 21,14.1" fill="#9a9a00" stroke="#000" stroke-width="2" stroke-linejoin="miter" stroke-miterlimit="1.5" /><rect x="9" y="4.1" width="12" height="10" fill="#ffffa8" stroke="#000" stroke-width="2"/><polygon points="-0.5,19 2,17 8,17 5.5,19" fill="#ffff00" stroke="#000" stroke-width="2" stroke-linejoin="miter" stroke-miterlimit="1.5" /><polygon points="5.5,19 8,17 8,21.5 5.5,23.5" fill="#9a9a00" stroke="#000" stroke-width="2" stroke-linejoin="miter" stroke-miterlimit="1.5" /><rect x="-0.5" y="19" width="6" height="4.5" fill="#ffffa8" stroke="#000" stroke-width="2"/><polyline points="8,4 2,17" fill="none" stroke="#ff0000" stroke-width="1.8"/><polyline points="6,21 21,15" fill="none" stroke="#ff0000" stroke-width="1.8"/></g><rect x="553" y="106.5" width="210" height="38.3" rx="4" fill="url(#tbgrad)"/><rect x="555" y="142.8" width="206" height="2" fill="#78a6e2"/><rect x="559" y="115" width="3.5" height="2.8" fill="#ffffff"/><rect x="558" y="114" width="3.5" height="2.8" fill="#6e9ddc"/><rect x="559" y="121.2" width="3.5" height="2.8" fill="#ffffff"/><rect x="558" y="120.2" width="3.5" height="2.8" fill="#6e9ddc"/><rect x="559" y="127.4" width="3.5" height="2.8" fill="#ffffff"/><rect x="558" y="126.4" width="3.5" height="2.8" fill="#6e9ddc"/><rect x="559" y="133.6" width="3.5" height="2.8" fill="#ffffff"/><rect x="558" y="132.6" width="3.5" height="2.8" fill="#6e9ddc"/><g transform="translate(575,113)"><polygon points="1.5,0.5 13,0.5 13,18 7,24 1.5,18" fill="#ffff00" stroke="#000" stroke-width="2" stroke-linejoin="miter" stroke-miterlimit="1.5" /><polyline points="1.5,9 13,3" fill="none" stroke="#000" stroke-width="2.4"/><polyline points="1.5,17 13,11" fill="none" stroke="#000" stroke-width="2.4"/><rect x="10" y="2" width="2" height="14" fill="#9a9a00" stroke="none" stroke-width="0"/></g><g transform="translate(613.8,113)"><ellipse cx="12" cy="6" rx="10.5" ry="5" fill="#ffff00" stroke="#000" stroke-width="2"/><rect x="1.5" y="6" width="21" height="14" fill="#ffff00" stroke="#000" stroke-width="2"/><ellipse cx="12" cy="20" rx="10.5" ry="3.5" fill="#ffff00" stroke="#000" stroke-width="2"/><polyline points="3.5,9 3.5,22" fill="none" stroke="#000" stroke-width="1.4"/><polyline points="6.3,9 6.3,22" fill="none" stroke="#000" stroke-width="1.4"/><polyline points="9.1,9 9.1,22" fill="none" stroke="#000" stroke-width="1.4"/><polyline points="11.9,9 11.9,22" fill="none" stroke="#000" stroke-width="1.4"/><polyline points="14.7,9 14.7,22" fill="none" stroke="#000" stroke-width="1.4"/><polyline points="17.5,9 17.5,22" fill="none" stroke="#000" stroke-width="1.4"/><polyline points="20.3,9 20.3,22" fill="none" stroke="#000" stroke-width="1.4"/><ellipse cx="12" cy="5.5" rx="6" ry="2.5" fill="#ffffa8" stroke="#000" stroke-width="1.5"/></g><g transform="translate(652.6,113)"><rect x="5" y="0.5" width="11" height="23" fill="#ffff00" stroke="#000" stroke-width="2"/><polyline points="5,21 16,11" fill="none" stroke="#000" stroke-width="3"/><rect x="12" y="2" width="3" height="9" fill="#9a9a00" stroke="none" stroke-width="0"/></g><g transform="translate(691.4,113)"><polygon points="0,10 7,4 19,3 26,9 26,23 0,23" fill="#ffffa8" stroke="#000" stroke-width="2" stroke-linejoin="miter" stroke-miterlimit="1.5" /><polygon points="1,10 8,5 15,4.5 8,11" fill="#ff9090" stroke="none" stroke-width="0" stroke-linejoin="miter" stroke-miterlimit="1.5" /><polygon points="15,4 25,8.5 16,9" fill="#ffff00" stroke="none" stroke-width="0" stroke-linejoin="miter" stroke-miterlimit="1.5" /><polyline points="0,11 8,11 15,4" fill="none" stroke="#000" stroke-width="1.2"/></g><g transform="translate(731.8,113)"><polygon points="0,10 9,3 26,3 26,9 18,16 18,23 0,23" fill="#ffff00" stroke="#000" stroke-width="2" stroke-linejoin="miter" stroke-miterlimit="1.5" /><polygon points="0.5,10 9,3.5 25,3.5 17,10" fill="#ff9090" stroke="#000" stroke-width="1.2" stroke-linejoin="miter" stroke-miterlimit="1.5" /><rect x="0" y="10" width="18" height="13" fill="#ffffa8" stroke="#000" stroke-width="2"/></g><rect x="767" y="106.5" width="317" height="38.3" rx="4" fill="url(#tbgrad)"/><rect x="769" y="142.8" width="313" height="2" fill="#78a6e2"/><rect x="773" y="115" width="3.5" height="2.8" fill="#ffffff"/><rect x="772" y="114" width="3.5" height="2.8" fill="#6e9ddc"/><rect x="773" y="121.2" width="3.5" height="2.8" fill="#ffffff"/><rect x="772" y="120.2" width="3.5" height="2.8" fill="#6e9ddc"/><rect x="773" y="127.4" width="3.5" height="2.8" fill="#ffffff"/><rect x="772" y="126.4" width="3.5" height="2.8" fill="#6e9ddc"/><rect x="773" y="133.6" width="3.5" height="2.8" fill="#ffffff"/><rect x="772" y="132.6" width="3.5" height="2.8" fill="#6e9ddc"/><g transform="translate(789.5,113)"><polygon points="5,6 10,1 21,1 16,6" fill="#ffff00" stroke="#000" stroke-width="2" stroke-linejoin="miter" stroke-miterlimit="1.5" /><polygon points="16,6 21,1 21,11 16,16" fill="#9a9a00" stroke="#000" stroke-width="2" stroke-linejoin="miter" stroke-miterlimit="1.5" /><rect x="5" y="6" width="11" height="10" fill="#ffff00" stroke="#000" stroke-width="2"/><polygon points="9,13 12,10 21,10 18,13" fill="#00a000" stroke="#000" stroke-width="2" stroke-linejoin="miter" stroke-miterlimit="1.5" /><polygon points="18,13 21,10 21,17 18,20" fill="#006000" stroke="#000" stroke-width="2" stroke-linejoin="miter" stroke-miterlimit="1.5" /><rect x="9" y="13" width="9" height="7" fill="#00c800" stroke="#000" stroke-width="2"/><polygon points="9,17 11,15 19,15 17,17" fill="#ffff00" stroke="#000" stroke-width="2" stroke-linejoin="miter" stroke-miterlimit="1.5" /><polygon points="17,17 19,15 19,20 17,22" fill="#9a9a00" stroke="#000" stroke-width="2" stroke-linejoin="miter" stroke-miterlimit="1.5" /><rect x="9" y="17" width="8" height="5" fill="#ffffa8" stroke="#000" stroke-width="2"/><polyline points="2,19 9,19" fill="none" stroke="#ff0000" stroke-width="3"/><polyline points="5.5,15 5.5,23" fill="none" stroke="#ff0000" stroke-width="3"/></g><g transform="translate(828.6,113)"><polygon points="9,6 14,1 24,1 19,6" fill="#ffff00" stroke="#000" stroke-width="2" stroke-linejoin="miter" stroke-miterlimit="1.5" /><polygon points="19,6 24,1 24,11 19,16" fill="#9a9a00" stroke="#000" stroke-width="2" stroke-linejoin="miter" stroke-miterlimit="1.5" /><rect x="9" y="6" width="10" height="10" fill="#ffffa8" stroke="#000" stroke-width="2"/><polygon points="2,19 5,16 13,16 10,19" fill="none" stroke="#000" stroke-width="2" stroke-linejoin="miter" stroke-miterlimit="1.5" /><polygon points="10,19 13,16 13,21 10,24" fill="none" stroke="#000" stroke-width="2" stroke-linejoin="miter" stroke-miterlimit="1.5" /><rect x="2" y="19" width="8" height="5" fill="none" stroke="#000" stroke-width="2"/><polygon points="12,17 15,14 22,14 19,17" fill="#ffff00" stroke="#000" stroke-width="2" stroke-linejoin="miter" stroke-miterlimit="1.5" /><polygon points="19,17 22,14 22,20 19,23" fill="#9a9a00" stroke="#000" stroke-width="2" stroke-linejoin="miter" stroke-miterlimit="1.5" /><rect x="12" y="17" width="7" height="6" fill="#ffffa8" stroke="#000" stroke-width="2"/><polyline points="1,2 7,2" fill="none" stroke="#ff0000" stroke-width="2.5"/></g><g transform="translate(867.7,113)"><polygon points="9,6 14,1 24,1 19,6" fill="#ffff00" stroke="#000" stroke-width="2" stroke-linejoin="miter" stroke-miterlimit="1.5" /><polygon points="19,6 24,1 24,11 19,16" fill="#9a9a00" stroke="#000" stroke-width="2" stroke-linejoin="miter" stroke-miterlimit="1.5" /><rect x="9" y="6" width="10" height="10" fill="#ffffa8" stroke="#000" stroke-width="2"/><polygon points="1,18 4,15 12,15 9,18" fill="#00a000" stroke="#000" stroke-width="2" stroke-linejoin="miter" stroke-miterlimit="1.5" /><polygon points="9,18 12,15 12,21 9,24" fill="#006000" stroke="#000" stroke-width="2" stroke-linejoin="miter" stroke-miterlimit="1.5" /><rect x="1" y="18" width="8" height="6" fill="#00c800" stroke="#000" stroke-width="2"/><polygon points="12,17 15,14 22,14 19,17" fill="#ffff00" stroke="#000" stroke-width="2" stroke-linejoin="miter" stroke-miterlimit="1.5" /><polygon points="19,17 22,14 22,20 19,23" fill="#9a9a00" stroke="#000" stroke-width="2" stroke-linejoin="miter" stroke-miterlimit="1.5" /><rect x="12" y="17" width="7" height="6" fill="#ffffa8" stroke="#000" stroke-width="2"/><polyline points="1,2 7,2" fill="none" stroke="#ff0000" stroke-width="2.5"/></g><rect x="906.25" y="115" width="1.5" height="21" fill="#7aa2dc"/><rect x="907.75" y="115" width="1.5" height="21" fill="#ffffff"/><g transform="translate(920.8,113)"><polygon points="10,6 14,2 24,2 20,6" fill="#ffff00" stroke="#000" stroke-width="2" stroke-linejoin="miter" stroke-miterlimit="1.5" /><polygon points="20,6 24,2 24,11 20,15" fill="#9a9a00" stroke="#000" stroke-width="2" stroke-linejoin="miter" stroke-miterlimit="1.5" /><rect x="10" y="6" width="10" height="9" fill="#ffffa8" stroke="#000" stroke-width="2"/><rect x="12" y="4" width="6" height="5" fill="none" stroke="#000" stroke-width="1.5"/><polyline points="2,15 9,8" fill="none" stroke="#ff0000" stroke-width="1.5"/><polygon points="9,8 4.47452,9.13137 7.86863,12.5255" fill="#ff0000" stroke="#ff0000" stroke-width="0.5" stroke-linejoin="miter" stroke-miterlimit="1.5" /><polyline points="1,20 9,20" fill="none" stroke="#ff0000" stroke-width="3"/><polyline points="5,16 5,24" fill="none" stroke="#ff0000" stroke-width="3"/></g><g transform="translate(960.7,113)"><polygon points="10,6 14,2 24,2 20,6" fill="#ffff00" stroke="#000" stroke-width="2" stroke-linejoin="miter" stroke-miterlimit="1.5" /><polygon points="20,6 24,2 24,11 20,15" fill="#9a9a00" stroke="#000" stroke-width="2" stroke-linejoin="miter" stroke-miterlimit="1.5" /><rect x="10" y="6" width="10" height="9" fill="#ffffa8" stroke="#000" stroke-width="2"/><rect x="12" y="5" width="5" height="5" fill="#fff" stroke="#000" stroke-width="1.5"/><polyline points="9,7 2,14" fill="none" stroke="#ff0000" stroke-width="1.5"/><polygon points="2,14 6.52548,12.8686 3.13137,9.47452" fill="#ff0000" stroke="#ff0000" stroke-width="0.5" stroke-linejoin="miter" stroke-miterlimit="1.5" /><polygon points="1,18 3,16 9,16 7,18" fill="#ffff00" stroke="#000" stroke-width="2" stroke-linejoin="miter" stroke-miterlimit="1.5" /><polygon points="7,18 9,16 9,20 7,22" fill="#9a9a00" stroke="#000" stroke-width="2" stroke-linejoin="miter" stroke-miterlimit="1.5" /><rect x="1" y="18" width="6" height="4" fill="#ffffa8" stroke="#000" stroke-width="2"/><polyline points="15,22 21,22" fill="none" stroke="#ff0000" stroke-width="2.5"/></g><g transform="translate(998,113)"><polygon points="10,6 14,2 24,2 20,6" fill="#ffff00" stroke="#000" stroke-width="2" stroke-linejoin="miter" stroke-miterlimit="1.5" /><polygon points="20,6 24,2 24,11 20,15" fill="#9a9a00" stroke="#000" stroke-width="2" stroke-linejoin="miter" stroke-miterlimit="1.5" /><rect x="10" y="6" width="10" height="9" fill="#ffffa8" stroke="#000" stroke-width="2"/><rect x="12" y="5" width="5" height="5" fill="#fff" stroke="#000" stroke-width="1.5"/><polyline points="9,7 2,14" fill="none" stroke="#ff0000" stroke-width="1.5"/><polygon points="2,14 6.52548,12.8686 3.13137,9.47452" fill="#ff0000" stroke="#ff0000" stroke-width="0.5" stroke-linejoin="miter" stroke-miterlimit="1.5" /><polygon points="1,18 3,16 9,16 7,18" fill="#ffff00" stroke="#000" stroke-width="2" stroke-linejoin="miter" stroke-miterlimit="1.5" /><polygon points="7,18 9,16 9,20 7,22" fill="#9a9a00" stroke="#000" stroke-width="2" stroke-linejoin="miter" stroke-miterlimit="1.5" /><rect x="1" y="18" width="6" height="4" fill="#ffffa8" stroke="#000" stroke-width="2"/><polyline points="15,22 21,22" fill="none" stroke="#ff0000" stroke-width="2.5"/></g><rect x="1036.85" y="115" width="1.5" height="21" fill="#7aa2dc"/><rect x="1038.35" y="115" width="1.5" height="21" fill="#ffffff"/><g transform="translate(1052,113)"><polygon points="1,16 4,13 14,13 11,16" fill="none" stroke="#808080" stroke-width="2" stroke-linejoin="miter" stroke-miterlimit="1.5" /><polygon points="11,16 14,13 14,21 11,24" fill="none" stroke="#808080" stroke-width="2" stroke-linejoin="miter" stroke-miterlimit="1.5" /><rect x="1" y="16" width="10" height="8" fill="none" stroke="#808080" stroke-width="2"/><polygon points="12,13 15,10 25,10 22,13" fill="none" stroke="#808080" stroke-width="2" stroke-linejoin="miter" stroke-miterlimit="1.5" /><polygon points="22,13 25,10 25,18 22,21" fill="none" stroke="#808080" stroke-width="2" stroke-linejoin="miter" stroke-miterlimit="1.5" /><rect x="12" y="13" width="10" height="8" fill="none" stroke="#808080" stroke-width="2"/><polygon points="12,8 15,5 24,5 21,8" fill="#00a000" stroke="#000" stroke-width="2" stroke-linejoin="miter" stroke-miterlimit="1.5" /><polygon points="21,8 24,5 24,10 21,13" fill="#006000" stroke="#000" stroke-width="2" stroke-linejoin="miter" stroke-miterlimit="1.5" /><rect x="12" y="8" width="9" height="5" fill="#00c800" stroke="#000" stroke-width="2"/><polyline points="7,13 7,3 15,3" fill="none" stroke="#808080" stroke-width="1.5"/></g><rect x="1088" y="106.5" width="343" height="38.3" rx="4" fill="url(#tbgrad)"/><rect x="1090" y="142.8" width="339" height="2" fill="#78a6e2"/><rect x="1094" y="115" width="3.5" height="2.8" fill="#ffffff"/><rect x="1093" y="114" width="3.5" height="2.8" fill="#6e9ddc"/><rect x="1094" y="121.2" width="3.5" height="2.8" fill="#ffffff"/><rect x="1093" y="120.2" width="3.5" height="2.8" fill="#6e9ddc"/><rect x="1094" y="127.4" width="3.5" height="2.8" fill="#ffffff"/><rect x="1093" y="126.4" width="3.5" height="2.8" fill="#6e9ddc"/><rect x="1094" y="133.6" width="3.5" height="2.8" fill="#ffffff"/><rect x="1093" y="132.6" width="3.5" height="2.8" fill="#6e9ddc"/><g transform="translate(1107,113)"><polygon points="1,14.5 4.8,11 15.8,11 12,14.5" fill="#ffff00" stroke="#000" stroke-width="2" stroke-linejoin="miter" stroke-miterlimit="1.5" /><polygon points="12,14.5 15.8,11 15.8,19.5 12,23" fill="#9a9a00" stroke="#000" stroke-width="2" stroke-linejoin="miter" stroke-miterlimit="1.5" /><rect x="1" y="14.5" width="11" height="8.5" fill="#ffffa8" stroke="#000" stroke-width="2"/><text x="15" y="16.5" font-family="Liberation Sans" font-size="18" font-weight="bold" fill="#ff0000">?</text></g><g transform="translate(1150,113)"><rect x="-0.4" y="10.5" width="11" height="9.7" fill="none" stroke="#0000ff" stroke-width="2.5"/><polyline points="3,10.5 6.5,8.3 15,8.3 15,17 10.6,20.2" fill="none" stroke="#0000ff" stroke-width="2"/><polyline points="3,14 8,14" fill="none" stroke="#a0a0a0" stroke-width="1.2"/><polyline points="5.2,1 5.2,8" fill="none" stroke="#000" stroke-width="1.6"/><polyline points="2.5,3.5 8,3.5" fill="none" stroke="#000" stroke-width="1.6"/><polyline points="15,18.2 24.7,18.2" fill="none" stroke="#000" stroke-width="1.6"/><polygon points="24.7,18.2 21.2,16.1 21.2,20.3" fill="#000" stroke="#000" stroke-width="0.5" stroke-linejoin="miter" stroke-miterlimit="1.5" /><polyline points="2,20.2 -2.5,23.7" fill="none" stroke="#000" stroke-width="1.6"/><polygon points="-2.5,23.7 0.97315,23.279 -1.23704,20.4373" fill="#000" stroke="#000" stroke-width="0.5" stroke-linejoin="miter" stroke-miterlimit="1.5" /><text x="13" y="15.5" font-family="Liberation Sans" font-size="17" font-weight="bold" fill="#ff0000">?</text></g><rect x="1187.55" y="115" width="1.5" height="21" fill="#7aa2dc"/><rect x="1189.05" y="115" width="1.5" height="21" fill="#ffffff"/><g transform="translate(1201.5,113)"><polygon points="0.4,4 4.4,0.6 14.9,0.6 10.9,4" fill="#ffff00" stroke="#000" stroke-width="2" stroke-linejoin="miter" stroke-miterlimit="1.5" /><polygon points="10.9,4 14.9,0.6 14.9,9.1 10.9,12.5" fill="#9a9a00" stroke="#000" stroke-width="2" stroke-linejoin="miter" stroke-miterlimit="1.5" /><rect x="0.4" y="4" width="10.5" height="8.5" fill="#ffffa8" stroke="#000" stroke-width="2"/><circle cx="19.2" cy="5.8" r="2.2" fill="none" stroke="red" stroke-width="1.6"/><circle cx="4.6" cy="17.4" r="2.2" fill="none" stroke="red" stroke-width="1.6"/><polyline points="16,17.5 25.5,11" fill="none" stroke="#000" stroke-width="1.6"/><polygon points="25.5,11 21.4256,11.2432 23.7973,14.7095" fill="#000" stroke="#000" stroke-width="0.5" stroke-linejoin="miter" stroke-miterlimit="1.5" /><polyline points="16,17.5 8,24" fill="none" stroke="#000" stroke-width="1.6"/><polygon points="8,24 12.0406,23.4228 9.39215,20.1631" fill="#000" stroke="#000" stroke-width="0.5" stroke-linejoin="miter" stroke-miterlimit="1.5" /></g><g transform="translate(1241,113)"><polyline points="8.1,18.2 8.1,4.8" fill="none" stroke="#3030ff" stroke-width="2.2"/><polygon points="8.1,4.8 5.7,8.8 10.5,8.8" fill="#3030ff" stroke="#3030ff" stroke-width="0.5" stroke-linejoin="miter" stroke-miterlimit="1.5" /><polyline points="8.1,18.2 22.1,18.2" fill="none" stroke="#3030ff" stroke-width="2.2"/><polygon points="22.1,18.2 18.1,15.8 18.1,20.6" fill="#3030ff" stroke="#3030ff" stroke-width="0.5" stroke-linejoin="miter" stroke-miterlimit="1.5" /><rect x="-0.9" y="18.2" width="6" height="5.5" fill="#3030ff" stroke="none" stroke-width="0"/><text x="16" y="16" font-family="Liberation Sans" font-size="17" font-weight="bold" fill="#ff0000">?</text></g><g transform="translate(1282,113)"><polygon points="-0.8,8 9.7,1.3 9.7,16 -0.8,23" fill="#ffff00" stroke="#000" stroke-width="2" stroke-linejoin="miter" stroke-miterlimit="1.5" /><polyline points="4.8,11.8 20,11.8" fill="none" stroke="#ff0000" stroke-width="2.5"/><polygon points="20,11.8 15.5,9.1 15.5,14.5" fill="#ff0000" stroke="#ff0000" stroke-width="0.5" stroke-linejoin="miter" stroke-miterlimit="1.5" /><circle cx="22.5" cy="11.8" r="2.4" fill="#fff" stroke="#000" stroke-width="1.4"/></g><g transform="translate(1319.5,113)"><path d="M-0.5 8.8 L-0.5 23.7 A7.7 4 0 0 0 14.9 23.7 L14.9 8.8 Z" fill="#ffff00" stroke="#000" stroke-width="1.6"/><rect x="9.51" y="8.8" width="4.62" height="14.9" fill="#9a9a00" opacity="0.6"/><ellipse cx="7.2" cy="8.8" rx="7.7" ry="4" fill="#ffffa8" stroke="#000" stroke-width="1.6"/><polyline points="21,6 10,11" fill="none" stroke="#ff0000" stroke-width="2.2"/><polygon points="10,11 14.6346,11.5297 12.6483,7.15991" fill="#ff0000" stroke="#ff0000" stroke-width="0.5" stroke-linejoin="miter" stroke-miterlimit="1.5" /><circle cx="23" cy="3.5" r="2.3" fill="#fff" stroke="#000" stroke-width="1.4"/></g><g transform="translate(1360.5,113)"><polygon points="-0.3,1 10,8 11.5,24 1,17" fill="#ffff00" stroke="#000" stroke-width="2" stroke-linejoin="miter" stroke-miterlimit="1.5" /><polygon points="14,8 25.5,1 24.5,17 13,24" fill="#ffff00" stroke="#000" stroke-width="2" stroke-linejoin="miter" stroke-miterlimit="1.5" /><polyline points="12.2,8 12.2,24" fill="none" stroke="#000" stroke-width="2"/><path d="M4 9 C6 2 18 2 21 9" fill="none" stroke="#ff0000" stroke-width="2.5"/><polygon points="1,8 7,8 4,13" fill="#ff0000" stroke="#ff0000" stroke-width="0.5" stroke-linejoin="miter" stroke-miterlimit="1.5" /><polygon points="18,8 24,8 21,13" fill="#ff0000" stroke="#ff0000" stroke-width="0.5" stroke-linejoin="miter" stroke-miterlimit="1.5" /></g><g transform="translate(1398,113)"><path d="M-0.8 8.8 L-0.8 23.7 A7.7 4 0 0 0 14.6 23.7 L14.6 8.8 Z" fill="#ffff00" stroke="#000" stroke-width="1.6"/><rect x="9.21" y="8.8" width="4.62" height="14.9" fill="#9a9a00" opacity="0.6"/><ellipse cx="6.9" cy="8.8" rx="7.7" ry="4" fill="#ffffa8" stroke="#000" stroke-width="1.6"/><text x="15.3" y="16" font-family="Liberation Sans" font-size="17" font-weight="bold" fill="#ff0000">?</text></g><rect x="1435" y="106.5" width="238" height="38.3" rx="4" fill="url(#tbgrad)"/><rect x="1437" y="142.8" width="234" height="2" fill="#78a6e2"/><rect x="1441" y="115" width="3.5" height="2.8" fill="#ffffff"/><rect x="1440" y="114" width="3.5" height="2.8" fill="#6e9ddc"/><rect x="1441" y="121.2" width="3.5" height="2.8" fill="#ffffff"/><rect x="1440" y="120.2" width="3.5" height="2.8" fill="#6e9ddc"/><rect x="1441" y="127.4" width="3.5" height="2.8" fill="#ffffff"/><rect x="1440" y="126.4" width="3.5" height="2.8" fill="#6e9ddc"/><rect x="1441" y="133.6" width="3.5" height="2.8" fill="#ffffff"/><rect x="1440" y="132.6" width="3.5" height="2.8" fill="#6e9ddc"/><g transform="translate(1457,113)"><polyline points="9.9,12.6 9.9,1.5" fill="none" stroke="#0000ff" stroke-width="2.4"/><polygon points="9.9,1.5 7.2,6 12.6,6" fill="#0000ff" stroke="#0000ff" stroke-width="0.5" stroke-linejoin="miter" stroke-miterlimit="1.5" /><polyline points="9.9,12.6 24.2,12.6" fill="none" stroke="#0000ff" stroke-width="2.4"/><polygon points="24.2,12.6 19.7,9.9 19.7,15.3" fill="#0000ff" stroke="#0000ff" stroke-width="0.5" stroke-linejoin="miter" stroke-miterlimit="1.5" /><polyline points="9.9,12.6 3,18" fill="none" stroke="#0000ff" stroke-width="2.4"/><rect x="-0.2" y="15.4" width="4.8" height="5.5" fill="#0000ff" stroke="none" stroke-width="0"/><circle cx="9.9" cy="12.6" r="2.6" fill="none" stroke="red" stroke-width="1.5"/></g><g transform="translate(1496,113)"><polyline points="6,16 6,6" fill="none" stroke="#0000ff" stroke-width="2.2"/><polygon points="6,6 3.6,10 8.4,10" fill="#0000ff" stroke="#0000ff" stroke-width="0.5" stroke-linejoin="miter" stroke-miterlimit="1.5" /><polyline points="6,16 19,16" fill="none" stroke="#0000ff" stroke-width="2.2"/><polygon points="19,16 15,13.6 15,18.4" fill="#0000ff" stroke="#0000ff" stroke-width="0.5" stroke-linejoin="miter" stroke-miterlimit="1.5" /><polyline points="6,16 1,20" fill="none" stroke="#0000ff" stroke-width="2.2"/><rect x="-1.5" y="18.5" width="4.5" height="5" fill="#0000ff" stroke="none" stroke-width="0"/><circle cx="6" cy="16" r="2.4" fill="none" stroke="red" stroke-width="1.4"/><path d="M11 2.5 C18 0 24 3 23 10" fill="none" stroke="#ff0000" stroke-width="3.5"/><polygon points="18.5,8 26.5,8 22.5,13" fill="#ff0000" stroke="#ff0000" stroke-width="0.5" stroke-linejoin="miter" stroke-miterlimit="1.5" /></g><rect x="1533.85" y="115" width="1.5" height="21" fill="#7aa2dc"/><rect x="1535.35" y="115" width="1.5" height="21" fill="#ffffff"/><g transform="translate(1549,113)"><rect x="12.6" y="0.6" width="13.3" height="11.9" fill="#fff" stroke="#000" stroke-width="2.2"/><rect x="-1.4" y="13.2" width="14" height="10.5" fill="#ffff00" stroke="#000" stroke-width="2.2"/><path d="M11 1.5 C5 1.5 3 4 3 8" fill="none" stroke="#ff0000" stroke-width="2.2"/><polygon points="-0.5,6 6.5,6 3,10.5" fill="#ff0000" stroke="#ff0000" stroke-width="0.5" stroke-linejoin="miter" stroke-miterlimit="1.5" /><path d="M13.5 23 C19 23 21 20 21 16" fill="none" stroke="#0000ff" stroke-width="2.2"/><polygon points="17.5,17 24.5,17 21,12.5" fill="#0000ff" stroke="#0000ff" stroke-width="0.5" stroke-linejoin="miter" stroke-miterlimit="1.5" /></g><g transform="translate(1588,113)"><polygon points="-1.3,4 2.7,0.6 12.7,0.6 8.7,4" fill="#ffff00" stroke="#000" stroke-width="2" stroke-linejoin="miter" stroke-miterlimit="1.5" /><polygon points="8.7,4 12.7,0.6 12.7,9.1 8.7,12.5" fill="#9a9a00" stroke="#000" stroke-width="2" stroke-linejoin="miter" stroke-miterlimit="1.5" /><rect x="-1.3" y="4" width="10" height="8.5" fill="#ffffa8" stroke="#000" stroke-width="2"/><path d="M16 3 C21 1 25 4 25 8" fill="none" stroke="#ff0000" stroke-width="2.2"/><polygon points="12,3 17,-0.5 17,6.5" fill="#ff0000" stroke="#ff0000" stroke-width="0.5" stroke-linejoin="miter" stroke-miterlimit="1.5" /><path d="M-0.5 14 C-0.5 19 3 21 8 21" fill="none" stroke="#ff0000" stroke-width="2.2"/><polygon points="7,17.5 11.5,21 7,24.5" fill="#ff0000" stroke="#ff0000" stroke-width="0.5" stroke-linejoin="miter" stroke-miterlimit="1.5" /><rect x="13" y="15" width="10" height="8.5" fill="none" stroke="#000" stroke-width="2.2"/><rect x="15.5" y="12.5" width="10" height="8.5" fill="none" stroke="#000" stroke-width="2.2"/></g><rect x="1627.25" y="115" width="1.5" height="21" fill="#7aa2dc"/><rect x="1628.75" y="115" width="1.5" height="21" fill="#ffffff"/><g transform="translate(1642,113)"><rect x="-0.3" y="0.6" width="25.6" height="23" fill="none" stroke="#ff0000" stroke-width="1.8"/><polygon points="2,5.3 4.8,2.5 12.3,2.5 9.5,5.3" fill="#ffff00" stroke="#000" stroke-width="2" stroke-linejoin="miter" stroke-miterlimit="1.5" /><polygon points="9.5,5.3 12.3,2.5 12.3,10 9.5,12.8" fill="#9a9a00" stroke="#000" stroke-width="2" stroke-linejoin="miter" stroke-miterlimit="1.5" /><rect x="2" y="5.3" width="7.5" height="7.5" fill="#ffffa8" stroke="#000" stroke-width="2"/><polygon points="9.7,16.3 12.7,13.5 21.2,13.5 18.2,16.3" fill="#ffff00" stroke="#000" stroke-width="2" stroke-linejoin="miter" stroke-miterlimit="1.5" /><polygon points="18.2,16.3 21.2,13.5 21.2,20.5 18.2,23.3" fill="#9a9a00" stroke="#000" stroke-width="2" stroke-linejoin="miter" stroke-miterlimit="1.5" /><rect x="9.7" y="16.3" width="8.5" height="7" fill="#ffffa8" stroke="#000" stroke-width="2"/><polyline points="17,4.5 25,4.5" fill="none" stroke="#ff0000" stroke-width="2.2"/><polygon points="25,4.5 21.5,2.4 21.5,6.6" fill="#ff0000" stroke="#ff0000" stroke-width="0.5" stroke-linejoin="miter" stroke-miterlimit="1.5" /><polyline points="22,4.5 22,10" fill="none" stroke="#ff0000" stroke-width="2.2"/></g><rect x="1678" y="106.5" width="172" height="38.3" rx="4" fill="url(#tbgrad)"/><rect x="1680" y="142.8" width="168" height="2" fill="#78a6e2"/><rect x="1684" y="115" width="3.5" height="2.8" fill="#ffffff"/><rect x="1683" y="114" width="3.5" height="2.8" fill="#6e9ddc"/><rect x="1684" y="121.2" width="3.5" height="2.8" fill="#ffffff"/><rect x="1683" y="120.2" width="3.5" height="2.8" fill="#6e9ddc"/><rect x="1684" y="127.4" width="3.5" height="2.8" fill="#ffffff"/><rect x="1683" y="126.4" width="3.5" height="2.8" fill="#6e9ddc"/><rect x="1684" y="133.6" width="3.5" height="2.8" fill="#ffffff"/><rect x="1683" y="132.6" width="3.5" height="2.8" fill="#6e9ddc"/><g transform="translate(1699.6,113)"><line x1="16.42" y1="16.28" x2="26.2" y2="23.7" stroke="#000" stroke-width="3.2"/><line x1="22.7" y1="20.2" x2="26.2" y2="23.7" stroke="#0020c0" stroke-width="3"/><ellipse cx="9.7" cy="10.4" rx="11.2" ry="9.8" fill="#f2f2f2" stroke="#000" stroke-width="2.6"/><polygon points="5.9,4.8 12,4.8 15,8 15,14 5.9,14" fill="#c8c8c8" stroke="#000" stroke-width="1.5" stroke-linejoin="miter" stroke-miterlimit="1.5" /></g><g transform="translate(1738.6,113)"><line x1="16.42" y1="16.28" x2="26.2" y2="23.7" stroke="#000" stroke-width="3.2"/><line x1="22.7" y1="20.2" x2="26.2" y2="23.7" stroke="#0020c0" stroke-width="3"/><ellipse cx="9.7" cy="10.4" rx="11.2" ry="9.8" fill="#f2f2f2" stroke="#000" stroke-width="2.6"/><rect x="4" y="7" width="11.5" height="7" fill="#c8c8c8" stroke="#000" stroke-width="1.5"/></g><g transform="translate(1777.4,113)"><line x1="16.42" y1="16.28" x2="26.2" y2="23.7" stroke="#000" stroke-width="3.2"/><line x1="22.7" y1="20.2" x2="26.2" y2="23.7" stroke="#0020c0" stroke-width="3"/><ellipse cx="9.7" cy="10.4" rx="11.2" ry="9.8" fill="#f2f2f2" stroke="#000" stroke-width="2.6"/><polygon points="2.5,10.4 9,4.5 9,8 16,8 16,13 9,13 9,16.5" fill="#000" stroke="#000" stroke-width="0.5" stroke-linejoin="miter" stroke-miterlimit="1.5" /></g><g transform="translate(1816,113)"><line x1="16.42" y1="16.28" x2="26.2" y2="23.7" stroke="#000" stroke-width="3.2"/><line x1="22.7" y1="20.2" x2="26.2" y2="23.7" stroke="#0020c0" stroke-width="3"/><ellipse cx="9.7" cy="10.4" rx="11.2" ry="9.8" fill="#f2f2f2" stroke="#000" stroke-width="2.6"/><polygon points="17,10.4 10.5,4.5 10.5,8 3.5,8 3.5,13 10.5,13 10.5,16.5" fill="#000" stroke="#000" stroke-width="0.5" stroke-linejoin="miter" stroke-miterlimit="1.5" /></g><rect x="2096" y="106.5" width="93" height="38.3" rx="4" fill="url(#tbgrad)"/><rect x="2098" y="142.8" width="89" height="2" fill="#78a6e2"/><rect x="2102" y="115" width="3.5" height="2.8" fill="#ffffff"/><rect x="2101" y="114" width="3.5" height="2.8" fill="#6e9ddc"/><rect x="2102" y="121.2" width="3.5" height="2.8" fill="#ffffff"/><rect x="2101" y="120.2" width="3.5" height="2.8" fill="#6e9ddc"/><rect x="2102" y="127.4" width="3.5" height="2.8" fill="#ffffff"/><rect x="2101" y="126.4" width="3.5" height="2.8" fill="#6e9ddc"/><rect x="2102" y="133.6" width="3.5" height="2.8" fill="#ffffff"/><rect x="2101" y="132.6" width="3.5" height="2.8" fill="#6e9ddc"/>
<text x="2118.5" y="133.5" font-family="Liberation Sans" font-weight="bold" font-size="20" textLength="24.5" lengthAdjust="spacingAndGlyphs" fill="#909090" transform="translate(1.5,1.5)">2D</text>
<text x="2118.5" y="133.5" font-family="Liberation Sans" font-weight="bold" font-size="20" textLength="24.5" lengthAdjust="spacingAndGlyphs" fill="#000">2D</text>
<rect x="2152" y="109" width="36" height="31" rx="2" fill="url(#btn3d)" stroke="#e8b060" stroke-width="1"/>
<text x="2157" y="133.5" font-family="Liberation Sans" font-weight="bold" font-size="20" textLength="25.5" lengthAdjust="spacingAndGlyphs" fill="#909090" transform="translate(1.5,1.5)">3D</text>
<text x="2157" y="133.5" font-family="Liberation Sans" font-weight="bold" font-size="20" textLength="25.5" lengthAdjust="spacingAndGlyphs" fill="#000">3D</text>
<rect x="33" y="1000" width="2333" height="40" fill="#bfdbfc"/>
<rect x="33" y="1001" width="301" height="39" rx="4" fill="url(#tbgrad)"/><rect x="35" y="1038" width="297" height="2" fill="#78a6e2"/>
<rect x="42" y="1011" width="3.5" height="2.8" fill="#ffffff"/><rect x="41" y="1010" width="3.5" height="2.8" fill="#6e9ddc"/><rect x="42" y="1017.2" width="3.5" height="2.8" fill="#ffffff"/><rect x="41" y="1016.2" width="3.5" height="2.8" fill="#6e9ddc"/><rect x="42" y="1023.4" width="3.5" height="2.8" fill="#ffffff"/><rect x="41" y="1022.4" width="3.5" height="2.8" fill="#6e9ddc"/><rect x="42" y="1029.6" width="3.5" height="2.8" fill="#ffffff"/><rect x="41" y="1028.6" width="3.5" height="2.8" fill="#6e9ddc"/>
<rect x="334" y="1001" width="68" height="38" fill="#c6defb"/>
<rect x="1533" y="1001" width="56" height="38" fill="#c6defb"/>
<rect x="128.5" y="1006.5" width="162" height="28.5" fill="#fff" stroke="#f6b45a" stroke-width="1.5"/>
<rect x="266" y="1007.2" width="24" height="27" fill="url(#ddgrad)"/>
<line x1="265.5" y1="1007" x2="265.5" y2="1035" stroke="#f6b45a" stroke-width="1.5"/>
<polygon points="274,1018 282,1018 278,1023" fill="#4a6aa0"/>
<rect x="136" y="1009" width="35" height="21.5" fill="#3384f0"/>
<text x="136.5" y="1027" font-family="Liberation Sans" font-size="19" textLength="32" lengthAdjust="spacingAndGlyphs" fill="#fff">nb3</text>
<path d="M303 1019 L303 1030 L323 1030 L323 1019" fill="none" stroke="#0000ff" stroke-width="3.2"/>
<path d="M313 1025 L313 1012" fill="none" stroke="#0000ff" stroke-width="3.2"/><polygon points="306,1017 313,1009 320,1017" fill="#0000ff"/>
<rect x="402" y="1001" width="253" height="39" rx="4" fill="url(#tbgrad)"/><rect x="404" y="1038" width="249" height="2" fill="#78a6e2"/><rect x="408" y="1011" width="3.5" height="2.8" fill="#ffffff"/><rect x="407" y="1010" width="3.5" height="2.8" fill="#6e9ddc"/><rect x="408" y="1017.2" width="3.5" height="2.8" fill="#ffffff"/><rect x="407" y="1016.2" width="3.5" height="2.8" fill="#6e9ddc"/><rect x="408" y="1023.4" width="3.5" height="2.8" fill="#ffffff"/><rect x="407" y="1022.4" width="3.5" height="2.8" fill="#6e9ddc"/><rect x="408" y="1029.6" width="3.5" height="2.8" fill="#ffffff"/><rect x="407" y="1028.6" width="3.5" height="2.8" fill="#6e9ddc"/><g transform="translate(424.3,1009)"><polygon points="0.5,7 12,0.5 24.5,0.5 13,7" fill="#ff0000" stroke="#000" stroke-width="2" stroke-linejoin="miter" stroke-miterlimit="1.5" /><polygon points="13,7 24.5,0.5 24.5,17 13,23.5" fill="#c0c000" stroke="#000" stroke-width="2" stroke-linejoin="miter" stroke-miterlimit="1.5" /><rect x="0.5" y="7" width="12.5" height="16.5" fill="#ffffa8" stroke="#000" stroke-width="2"/><polyline points="2.2,22 2.2,8.6 11.5,8.6" fill="none" stroke="#ff9090" stroke-width="2"/></g><g transform="translate(464.7,1009)"><path d="M6.5 4 L6.5 11 C6.5 18 11 19.5 20 18" fill="none" stroke="#000" stroke-width="11"/><path d="M6.5 4 L6.5 11 C6.5 18 11 19.5 20 18" fill="none" stroke="#ffff00" stroke-width="7.5"/><path d="M9 12 C9 16 12 17 19 16" fill="none" stroke="#c8c800" stroke-width="2"/><ellipse cx="6.5" cy="3.5" rx="5.5" ry="3.2" fill="#ffffa8" stroke="#000" stroke-width="2"/><ellipse cx="21" cy="17.5" rx="3.5" ry="5.5" fill="#ffff00" stroke="#000" stroke-width="2"/><ellipse cx="21" cy="17.5" rx="1.2" ry="2.5" fill="#808000"/></g><g transform="translate(503.5,1009)"><path d="M3 1.5 L3 18.5 Q3 21 6 21 L25 21" fill="none" stroke="#000" stroke-width="6.5" stroke-linejoin="round"/><path d="M3 1.5 L3 18.5 Q3 21 6 21 L25 21" fill="none" stroke="#ffff00" stroke-width="3.2" stroke-linejoin="round"/></g><g transform="translate(544,1009)"><rect x="1" y="0" width="24" height="24" fill="#c8c8c8" stroke="none" stroke-width="0"/><polyline points="1,0 1,24" fill="none" stroke="#000" stroke-width="2.5"/><path d="M9.7 3 L9.7 21 M9.7 3.5 L16 3.5 C23 3.5 23 20.5 16 20.5 L9.7 20.5" fill="none" stroke="#000" stroke-width="2.2"/><polyline points="2,3.6 15,3.6" fill="none" stroke="#8080ff" stroke-width="1.4"/><polyline points="2,20.8 15,20.8" fill="none" stroke="#8080ff" stroke-width="1.4"/><line x1="-1.5" y1="12.7" x2="25" y2="12.7" stroke="#8080ff" stroke-width="1.8" stroke-dasharray="6 2 2 2"/></g><g transform="translate(582.7,1009)"><rect x="0.5" y="0" width="23" height="21.5" fill="#d0d0d0" stroke="#ff0000" stroke-width="2"/><polyline points="2,3.6 22,3.6" fill="none" stroke="#a0a0a0" stroke-width="1.2"/><polyline points="2,18.5 22,18.5" fill="none" stroke="#a0a0a0" stroke-width="1.2"/><path d="M22 3.6 L6 3.6 C2 6 2 16 6 18.5 L22 18.5" fill="none" stroke="#ff4040" stroke-width="1.2"/><line x1="-1" y1="12" x2="25" y2="12" stroke="#8080ff" stroke-width="1.8" stroke-dasharray="6 2 2 2"/></g><g transform="translate(621.5,1009)"><path d="M0 1.5 L16 1.5 C25 1.5 25 20.5 16 20.5 L0 20.5 M1.5 1.5 L1.5 5 M1.5 17 L1.5 20.5" fill="none" stroke="#000" stroke-width="3"/><polyline points="3,4.5 19,4.5" fill="none" stroke="#8080ff" stroke-width="1.4"/><polyline points="3,17.5 19,17.5" fill="none" stroke="#8080ff" stroke-width="1.4"/><line x1="-1" y1="11" x2="25" y2="11" stroke="#8080ff" stroke-width="1.8" stroke-dasharray="6 2 2 2"/></g><rect x="658" y="1001" width="435" height="39" rx="4" fill="url(#tbgrad)"/><rect x="660" y="1038" width="431" height="2" fill="#78a6e2"/><rect x="664" y="1011" width="3.5" height="2.8" fill="#ffffff"/><rect x="663" y="1010" width="3.5" height="2.8" fill="#6e9ddc"/><rect x="664" y="1017.2" width="3.5" height="2.8" fill="#ffffff"/><rect x="663" y="1016.2" width="3.5" height="2.8" fill="#6e9ddc"/><rect x="664" y="1023.4" width="3.5" height="2.8" fill="#ffffff"/><rect x="663" y="1022.4" width="3.5" height="2.8" fill="#6e9ddc"/><rect x="664" y="1029.6" width="3.5" height="2.8" fill="#ffffff"/><rect x="663" y="1028.6" width="3.5" height="2.8" fill="#6e9ddc"/><g transform="translate(679,1009)"><polygon points="0.5,3.3 4,0.5 12,0.5 8.5,3.3" fill="#ffff00" stroke="#000" stroke-width="2" stroke-linejoin="miter" stroke-miterlimit="1.5" /><polygon points="8.5,3.3 12,0.5 12,9 8.5,11.8" fill="#9a9a00" stroke="#000" stroke-width="2" stroke-linejoin="miter" stroke-miterlimit="1.5" /><rect x="0.5" y="3.3" width="8" height="8.5" fill="#ffffa8" stroke="#000" stroke-width="2"/><rect x="1" y="13.5" width="7.5" height="6.8" fill="#ff0000" stroke="#000" stroke-width="1.6"/><rect x="10.5" y="7.5" width="14.5" height="15.8" fill="#fff" stroke="#000" stroke-width="2.2"/><rect x="11.5" y="8.5" width="12.5" height="3" fill="#ff0000" stroke="none" stroke-width="0"/><polyline points="13,14 22.5,14" fill="none" stroke="#707070" stroke-width="1.4"/><polyline points="13,17 22.5,17" fill="none" stroke="#707070" stroke-width="1.4"/><polyline points="13,20 22.5,20" fill="none" stroke="#707070" stroke-width="1.4"/></g><g transform="translate(719,1009)"><rect x="-1" y="0" width="7.6" height="6.4" fill="#ff0000" stroke="#000" stroke-width="1.6"/><rect x="-1" y="11.3" width="7.6" height="6.2" fill="#ff0000" stroke="#000" stroke-width="1.6"/><polyline points="6.6,3.2 9.5,3.2 9.5,8.5 17.8,8.5" fill="none" stroke="#0000ff" stroke-width="1.6"/><polyline points="6.6,14.4 9.5,14.4 9.5,20.5 17.8,20.5" fill="none" stroke="#0000ff" stroke-width="1.6"/><polygon points="13,6 17,8.5 13,11" fill="#0000ff" stroke="#0000ff" stroke-width="0.5" stroke-linejoin="miter" stroke-miterlimit="1.5" /><polygon points="13,18 17,20.5 13,23" fill="#0000ff" stroke="#0000ff" stroke-width="0.5" stroke-linejoin="miter" stroke-miterlimit="1.5" /><rect x="17.8" y="5.7" width="9" height="6.3" fill="#00e8f0" stroke="#000" stroke-width="1.6"/><rect x="17.8" y="17.5" width="9" height="6.3" fill="#00e8f0" stroke="#000" stroke-width="1.6"/></g><g transform="translate(758,1009)"><polygon points="9.8,3.5 14.3,0.5 24.3,0.5 19.8,3.5" fill="#ffff00" stroke="#000" stroke-width="2" stroke-linejoin="miter" stroke-miterlimit="1.5" /><polygon points="19.8,3.5 24.3,0.5 24.3,9 19.8,12" fill="#9a9a00" stroke="#000" stroke-width="2" stroke-linejoin="miter" stroke-miterlimit="1.5" /><rect x="9.8" y="3.5" width="10" height="8.5" fill="#ffffa8" stroke="#000" stroke-width="2"/><rect x="1.5" y="11.3" width="6" height="6.2" fill="#ff0000" stroke="#000" stroke-width="1.6"/><polyline points="7.5,14.4 11,14.4 11,20 18,20" fill="none" stroke="#0000ff" stroke-width="1.6"/><polygon points="14,17.5 18,20 14,22.5" fill="#0000ff" stroke="#0000ff" stroke-width="0.5" stroke-linejoin="miter" stroke-miterlimit="1.5" /><rect x="18" y="16.5" width="8.5" height="7" fill="#00e8f0" stroke="#000" stroke-width="1.6"/></g><g transform="translate(798,1009)"><polygon points="-2,3.5 2.5,0.5 11.5,0.5 7,3.5" fill="#ffff00" stroke="#000" stroke-width="2" stroke-linejoin="miter" stroke-miterlimit="1.5" /><polygon points="7,3.5 11.5,0.5 11.5,9 7,12" fill="#9a9a00" stroke="#000" stroke-width="2" stroke-linejoin="miter" stroke-miterlimit="1.5" /><rect x="-2" y="3.5" width="9" height="8.5" fill="#ffffa8" stroke="#000" stroke-width="2"/><rect x="-0.3" y="13.4" width="7.5" height="6.9" fill="#ff0000" stroke="#000" stroke-width="1.6"/><polyline points="10.9,12.7 17.5,20 25,5" fill="none" stroke="#ff0000" stroke-width="3.2"/></g><g transform="translate(837.7,1009)"><rect x="1.5" y="5.7" width="14.5" height="13.9" fill="none" stroke="#0000ff" stroke-width="2.6"/><rect x="4.5" y="8.5" width="9" height="7" fill="none" stroke="#a0a0a0" stroke-width="1.4"/><polyline points="5.8,0.8 5.8,6.8" fill="none" stroke="#000" stroke-width="1.5"/><polyline points="3,3.6 8.5,3.6" fill="none" stroke="#000" stroke-width="1.5"/><polyline points="16,16.9 25.5,16.9" fill="none" stroke="#000" stroke-width="1.8"/><polygon points="25.5,16.9 22,14.8 22,19" fill="#000" stroke="#000" stroke-width="0.5" stroke-linejoin="miter" stroke-miterlimit="1.5" /><polyline points="3.5,19 -1,23.5" fill="none" stroke="#000" stroke-width="1.6"/><polygon points="-1,23.5 2.39411,22.6515 -0.151472,20.1059" fill="#000" stroke="#000" stroke-width="0.5" stroke-linejoin="miter" stroke-miterlimit="1.5" /><circle cx="20.8" cy="3.2" r="3.6" fill="red" stroke="#000" stroke-width="1.5"/></g><g transform="translate(871.9,1009)"><polygon points="11,0 12.5,6 17,15 17,20 14,23.8 8,23.8 5,20 5,15 9.5,6" fill="#a0a0a0" stroke="#000" stroke-width="1.8" stroke-linejoin="miter" stroke-miterlimit="1.5" /><polygon points="10.5,10 9,16 10,21 12,16" fill="#e8e8e8" stroke="none" stroke-width="0" stroke-linejoin="miter" stroke-miterlimit="1.5" /><polygon points="22.5,0 23.5,5 26.5,9 26.5,12 22.5,12.6 18.5,12 18.5,9 21.5,5" fill="#c0b000" stroke="#808000" stroke-width="1.2" stroke-linejoin="miter" stroke-miterlimit="1.5" /></g><rect x="914.25" y="1011" width="1.5" height="21" fill="#7aa2dc"/><rect x="915.75" y="1011" width="1.5" height="21" fill="#ffffff"/><g transform="translate(929,1009)"><rect x="-1" y="0.2" width="9.5" height="6.2" fill="#ff0000" stroke="#000" stroke-width="1.4"/><polyline points="-0.3,1 -0.3,6" fill="none" stroke="#ff9090" stroke-width="1.5"/><polyline points="8.5,3.2 13.4,3.2 13.4,21.7" fill="none" stroke="#000" stroke-width="1.8"/><polyline points="13.4,10.6 16.2,10.6" fill="none" stroke="#000" stroke-width="1.8"/><polyline points="13.4,18.6 16.2,18.6" fill="none" stroke="#000" stroke-width="1.8"/><rect x="16.2" y="0.2" width="9.7" height="6.2" fill="#ff0000" stroke="none" stroke-width="0"/><rect x="16.2" y="7.8" width="9.7" height="5.6" fill="#ff0000" stroke="none" stroke-width="0"/><rect x="16.2" y="15.5" width="9.7" height="6.2" fill="#ff0000" stroke="none" stroke-width="0"/><polyline points="16.2,7 25.9,7" fill="none" stroke="#ff9090" stroke-width="1.4"/><polyline points="16.2,14.5 25.9,14.5" fill="none" stroke="#ff9090" stroke-width="1.4"/><polyline points="25.9,0.2 25.9,21.7" fill="none" stroke="#000" stroke-width="1.2"/><polyline points="16.2,21.7 25.9,21.7" fill="none" stroke="#000" stroke-width="1.4"/></g><g transform="translate(969.7,1009)"><polyline points="7.6,3 3.8,3 3.8,18.2 7.6,18.2" fill="none" stroke="#000" stroke-width="1.8"/><polyline points="3.8,10.6 7.6,10.6" fill="none" stroke="#000" stroke-width="1.8"/><rect x="7.6" y="0.2" width="11.9" height="6.2" fill="#ff0000" stroke="none" stroke-width="0"/><rect x="7.6" y="7.8" width="11.9" height="5.6" fill="#ff0000" stroke="none" stroke-width="0"/><rect x="7.6" y="15.5" width="11.9" height="6.2" fill="#ff0000" stroke="none" stroke-width="0"/><polyline points="7.6,7 19.5,7" fill="none" stroke="#ff9090" stroke-width="1.4"/><polyline points="7.6,14.5 19.5,14.5" fill="none" stroke="#000" stroke-width="1.6"/><polyline points="19.5,0.2 19.5,21.7" fill="none" stroke="#000" stroke-width="1.2"/><polyline points="7.6,21.7 19.5,21.7" fill="none" stroke="#000" stroke-width="1.4"/></g><g transform="translate(1008.5,1009)"><polyline points="7.6,3 3.8,3 3.8,18.2 7.6,18.2" fill="none" stroke="#000" stroke-width="1.8"/><polyline points="3.8,10.6 7.6,10.6" fill="none" stroke="#000" stroke-width="1.8"/><rect x="7.6" y="0.2" width="11.9" height="6.2" fill="#ff0000" stroke="none" stroke-width="0"/><rect x="7.6" y="7.8" width="11.9" height="5.6" fill="#ff0000" stroke="none" stroke-width="0"/><rect x="7.6" y="15.5" width="11.9" height="6.2" fill="#0000ff" stroke="none" stroke-width="0"/><polyline points="7.6,7 19.5,7" fill="none" stroke="#ff9090" stroke-width="1.4"/><polyline points="7.6,14.5 19.5,14.5" fill="none" stroke="#000" stroke-width="1.6"/><polyline points="19.5,0.2 19.5,21.7" fill="none" stroke="#000" stroke-width="1.2"/><polyline points="7.6,21.7 19.5,21.7" fill="none" stroke="#000" stroke-width="1.4"/></g><rect x="1046.25" y="1011" width="1.5" height="21" fill="#7aa2dc"/><rect x="1047.75" y="1011" width="1.5" height="21" fill="#ffffff"/><g transform="translate(1061,1009)"><rect x="0.5" y="0.5" width="10.5" height="4.5" fill="#505050" stroke="#000" stroke-width="1.4"/><rect x="11" y="0.5" width="12.5" height="4.5" fill="#00c800" stroke="#000" stroke-width="1.4"/><circle cx="4.2" cy="16.5" r="3.4" fill="red" stroke="#000" stroke-width="1.5"/><rect x="10" y="7.5" width="13.5" height="16" fill="#fff" stroke="#000" stroke-width="2.2"/><rect x="11" y="8.5" width="11.5" height="3" fill="#ff0000" stroke="none" stroke-width="0"/><polyline points="12.5,14 21,14" fill="none" stroke="#707070" stroke-width="1.4"/><polyline points="12.5,17 21,17" fill="none" stroke="#707070" stroke-width="1.4"/><polyline points="12.5,20 21,20" fill="none" stroke="#707070" stroke-width="1.4"/></g><rect x="1096" y="1001" width="437" height="39" rx="4" fill="url(#tbgrad)"/><rect x="1098" y="1038" width="433" height="2" fill="#78a6e2"/><rect x="1102" y="1011" width="3.5" height="2.8" fill="#ffffff"/><rect x="1101" y="1010" width="3.5" height="2.8" fill="#6e9ddc"/><rect x="1102" y="1017.2" width="3.5" height="2.8" fill="#ffffff"/><rect x="1101" y="1016.2" width="3.5" height="2.8" fill="#6e9ddc"/><rect x="1102" y="1023.4" width="3.5" height="2.8" fill="#ffffff"/><rect x="1101" y="1022.4" width="3.5" height="2.8" fill="#6e9ddc"/><rect x="1102" y="1029.6" width="3.5" height="2.8" fill="#ffffff"/><rect x="1101" y="1028.6" width="3.5" height="2.8" fill="#6e9ddc"/><g transform="translate(1118.7,1009)"><polygon points="1.3,2.8 4.3,0.3 11.8,0.3 8.8,2.8" fill="#ff0000" stroke="#000" stroke-width="2" stroke-linejoin="miter" stroke-miterlimit="1.5" /><polygon points="8.8,2.8 11.8,0.3 11.8,6.3 8.8,8.8" fill="#900000" stroke="#000" stroke-width="2" stroke-linejoin="miter" stroke-miterlimit="1.5" /><rect x="1.3" y="2.8" width="7.5" height="6" fill="#ff9090" stroke="#000" stroke-width="2"/><polyline points="13,0.5 25.5,9" fill="none" stroke="#ff0000" stroke-width="2.6"/><polyline points="13,9 25.5,0.5" fill="none" stroke="#ff0000" stroke-width="2.6"/><path d="M2 10 C2 17 6 21 12 22" fill="none" stroke="#000" stroke-width="3"/><polygon points="10,19 14,22.3 10,25" fill="#000" stroke="#000" stroke-width="0.5" stroke-linejoin="miter" stroke-miterlimit="1.5" /><polygon points="14.6,15.6 17.6,12.6 25.1,12.6 22.1,15.6" fill="#ffff00" stroke="#000" stroke-width="2" stroke-linejoin="miter" stroke-miterlimit="1.5" /><polygon points="22.1,15.6 25.1,12.6 25.1,20.6 22.1,23.6" fill="#9a9a00" stroke="#000" stroke-width="2" stroke-linejoin="miter" stroke-miterlimit="1.5" /><rect x="14.6" y="15.6" width="7.5" height="8" fill="#ffffa8" stroke="#000" stroke-width="2"/></g><g transform="translate(1157.6,1009)"><polygon points="1.3,2.8 4.3,0.3 11.8,0.3 8.8,2.8" fill="#ff0000" stroke="#000" stroke-width="2" stroke-linejoin="miter" stroke-miterlimit="1.5" /><polygon points="8.8,2.8 11.8,0.3 11.8,6.3 8.8,8.8" fill="#900000" stroke="#000" stroke-width="2" stroke-linejoin="miter" stroke-miterlimit="1.5" /><rect x="1.3" y="2.8" width="7.5" height="6" fill="#ff9090" stroke="#000" stroke-width="2"/><polyline points="13,0.5 25.5,9" fill="none" stroke="#ff0000" stroke-width="2.6"/><polyline points="13,9 25.5,0.5" fill="none" stroke="#ff0000" stroke-width="2.6"/><path d="M2 10 C2 17 6 21 12 22" fill="none" stroke="#000" stroke-width="3"/><polygon points="10,19 14,22.3 10,25" fill="#000" stroke="#000" stroke-width="0.5" stroke-linejoin="miter" stroke-miterlimit="1.5" /><polygon points="14.6,15.6 17.6,12.6 25.1,12.6 22.1,15.6" fill="#ff0000" stroke="#000" stroke-width="2" stroke-linejoin="miter" stroke-miterlimit="1.5" /><polygon points="22.1,15.6 25.1,12.6 25.1,20.6 22.1,23.6" fill="#900000" stroke="#000" stroke-width="2" stroke-linejoin="miter" stroke-miterlimit="1.5" /><rect x="14.6" y="15.6" width="7.5" height="8" fill="#ff9090" stroke="#000" stroke-width="2"/></g><rect x="1196.75" y="1011" width="1.5" height="21" fill="#7aa2dc"/><rect x="1198.25" y="1011" width="1.5" height="21" fill="#ffffff"/><g transform="translate(1212,1009)"><polygon points="-1.9,3.5 1.6,0.5 10.6,0.5 7.1,3.5" fill="#ffff00" stroke="#000" stroke-width="2" stroke-linejoin="miter" stroke-miterlimit="1.5" /><polygon points="7.1,3.5 10.6,0.5 10.6,9 7.1,12" fill="#9a9a00" stroke="#000" stroke-width="2" stroke-linejoin="miter" stroke-miterlimit="1.5" /><rect x="-1.9" y="3.5" width="9" height="8.5" fill="#ffffa8" stroke="#000" stroke-width="2"/><polyline points="16.3,0 16.3,9.9" fill="none" stroke="#ff0000" stroke-width="2.2"/><polygon points="16.3,9.9 18.4,6.4 14.2,6.4" fill="#ff0000" stroke="#ff0000" stroke-width="0.5" stroke-linejoin="miter" stroke-miterlimit="1.5" /><polygon points="6.5,13.4 12.87,13.4 14.69,16.52 20.15,16.52 20.15,18.08 24.7,18.08 21.06,23.8 6.5,23.8" fill="#a09800" stroke="#000" stroke-width="1.8" stroke-linejoin="miter" stroke-miterlimit="1.5" /><polygon points="9.23,18.08 24.7,18.08 21.06,23.8 6.5,23.8" fill="#808000" stroke="#000" stroke-width="1.2" stroke-linejoin="miter" stroke-miterlimit="1.5" /></g><g transform="translate(1250.7,1009)"><polygon points="-1.4,3.5 2.4,0.5 11.9,0.5 8.1,3.5" fill="#ffff00" stroke="#000" stroke-width="2" stroke-linejoin="miter" stroke-miterlimit="1.5" /><polygon points="8.1,3.5 11.9,0.5 11.9,9 8.1,12" fill="#9a9a00" stroke="#000" stroke-width="2" stroke-linejoin="miter" stroke-miterlimit="1.5" /><rect x="-1.4" y="3.5" width="9.5" height="8.5" fill="#ffffa8" stroke="#000" stroke-width="2"/><rect x="13.2" y="0" width="11.9" height="9.9" fill="#ffff00" stroke="none" stroke-width="0"/><circle cx="15.5" cy="2.5" r="1.5" fill="none" stroke="#c0c000"/><circle cx="22.5" cy="2.5" r="1.5" fill="none" stroke="#c0c000"/><circle cx="15.5" cy="7.5" r="1.5" fill="none" stroke="#c0c000"/><circle cx="22.5" cy="7.5" r="1.5" fill="none" stroke="#c0c000"/><polyline points="2.8,23.8 2.8,13.4" fill="none" stroke="#ff0000" stroke-width="2.4"/><polygon points="2.8,13.4 0.7,16.9 4.9,16.9" fill="#ff0000" stroke="#ff0000" stroke-width="0.5" stroke-linejoin="miter" stroke-miterlimit="1.5" /><polygon points="7.6,13.4 13.725,13.4 15.475,16.52 20.725,16.52 20.725,18.08 25.1,18.08 21.6,23.8 7.6,23.8" fill="#a09800" stroke="#000" stroke-width="1.8" stroke-linejoin="miter" stroke-miterlimit="1.5" /><polygon points="10.225,18.08 25.1,18.08 21.6,23.8 7.6,23.8" fill="#808000" stroke="#000" stroke-width="1.2" stroke-linejoin="miter" stroke-miterlimit="1.5" /></g><g transform="translate(1289.6,1009)"><polygon points="-0.5,3.3 2.7,0.5 10.7,0.5 7.5,3.3" fill="#ffff00" stroke="#000" stroke-width="2" stroke-linejoin="miter" stroke-miterlimit="1.5" /><polygon points="7.5,3.3 10.7,0.5 10.7,7.5 7.5,10.3" fill="#9a9a00" stroke="#000" stroke-width="2" stroke-linejoin="miter" stroke-miterlimit="1.5" /><rect x="-0.5" y="3.3" width="8" height="7" fill="#ffffa8" stroke="#000" stroke-width="2"/><polyline points="24.6,12 12.7,1.5" fill="none" stroke="#ff0000" stroke-width="1.8"/><polygon points="12.7,1.5 14.1115,5.9461 17.2872,2.34688" fill="#ff0000" stroke="#ff0000" stroke-width="0.5" stroke-linejoin="miter" stroke-miterlimit="1.5" /><polyline points="-0.2,12 11.7,21" fill="none" stroke="#000" stroke-width="1.5"/><polygon points="11.7,21 10.1752,17.2138 7.64172,20.5637" fill="#000" stroke="#000" stroke-width="0.5" stroke-linejoin="miter" stroke-miterlimit="1.5" /><polygon points="14.9,15.6 18.4,12.6 25.4,12.6 21.9,15.6" fill="#ff0000" stroke="#000" stroke-width="2" stroke-linejoin="miter" stroke-miterlimit="1.5" /><polygon points="21.9,15.6 25.4,12.6 25.4,20.8 21.9,23.8" fill="#900000" stroke="#000" stroke-width="2" stroke-linejoin="miter" stroke-miterlimit="1.5" /><rect x="14.9" y="15.6" width="7" height="8.2" fill="#ff9090" stroke="#000" stroke-width="2"/></g><g transform="translate(1330,1009)"><polygon points="-1.8,3.5 1.7,0.5 11.2,0.5 7.7,3.5" fill="#ffff00" stroke="#000" stroke-width="2" stroke-linejoin="miter" stroke-miterlimit="1.5" /><polygon points="7.7,3.5 11.2,0.5 11.2,9 7.7,12" fill="#9a9a00" stroke="#000" stroke-width="2" stroke-linejoin="miter" stroke-miterlimit="1.5" /><rect x="-1.8" y="3.5" width="9.5" height="8.5" fill="#ffffa8" stroke="#000" stroke-width="2"/><path d="M13 12 L13 9 C15 6 20 6 22.5 10" fill="none" stroke="#000" stroke-width="1.8"/><polygon points="20,10 25,10 22.5,13" fill="#000" stroke="#000" stroke-width="0.5" stroke-linejoin="miter" stroke-miterlimit="1.5" /><polygon points="7.3,12.6 13.425,12.6 15.175,15.96 20.425,15.96 20.425,17.64 24.8,17.64 21.3,23.8 7.3,23.8" fill="#ffff00" stroke="#000" stroke-width="1.8" stroke-linejoin="miter" stroke-miterlimit="1.5" /><polygon points="9.925,17.64 24.8,17.64 21.3,23.8 7.3,23.8" fill="#ffff00" stroke="#000" stroke-width="1.2" stroke-linejoin="miter" stroke-miterlimit="1.5" /></g><g transform="translate(1368.7,1009)"><path d="M3 13 C3 8 6 5 10 5 M20 11 C20 16 17 19 13 19" fill="none" stroke="#000" stroke-width="3.5"/><polygon points="8,1.5 15,5 9,9" fill="#000" stroke="#000" stroke-width="0.5" stroke-linejoin="miter" stroke-miterlimit="1.5" /><polygon points="15,15 8,19 14,22.5" fill="#000" stroke="#000" stroke-width="0.5" stroke-linejoin="miter" stroke-miterlimit="1.5" /><polygon points="14,3 22,7 16,11" fill="#000" stroke="#000" stroke-width="0.5" stroke-linejoin="miter" stroke-miterlimit="1.5" /><polygon points="9,13 1,17 7,21" fill="#000" stroke="#000" stroke-width="0.5" stroke-linejoin="miter" stroke-miterlimit="1.5" /></g><rect x="1406.25" y="1011" width="1.5" height="21" fill="#7aa2dc"/><rect x="1407.75" y="1011" width="1.5" height="21" fill="#ffffff"/><g transform="translate(1421.5,1009)"><polygon points="-1.8,3.5 2,0.5 11.5,0.5 7.7,3.5" fill="#ffff00" stroke="#000" stroke-width="2" stroke-linejoin="miter" stroke-miterlimit="1.5" /><polygon points="7.7,3.5 11.5,0.5 11.5,9 7.7,12" fill="#9a9a00" stroke="#000" stroke-width="2" stroke-linejoin="miter" stroke-miterlimit="1.5" /><rect x="-1.8" y="3.5" width="9.5" height="8.5" fill="#ffffa8" stroke="#000" stroke-width="2"/><polyline points="12,0.5 25.5,9.5" fill="none" stroke="#ff0000" stroke-width="2.6"/><polyline points="12,9.5 25.5,0.5" fill="none" stroke="#ff0000" stroke-width="2.6"/><polyline points="1.7,23.8 1.7,13.4" fill="none" stroke="#ff0000" stroke-width="2.4"/><polygon points="1.7,13.4 -0.4,16.9 3.8,16.9" fill="#ff0000" stroke="#ff0000" stroke-width="0.5" stroke-linejoin="miter" stroke-miterlimit="1.5" /><polygon points="7,13.4 13.475,13.4 15.325,16.52 20.875,16.52 20.875,18.08 25.5,18.08 21.8,23.8 7,23.8" fill="#a09800" stroke="#000" stroke-width="1.8" stroke-linejoin="miter" stroke-miterlimit="1.5" /><polygon points="9.775,18.08 25.5,18.08 21.8,23.8 7,23.8" fill="#808000" stroke="#000" stroke-width="1.2" stroke-linejoin="miter" stroke-miterlimit="1.5" /></g><g transform="translate(1460,1009)"><polygon points="-1,14.7 2.3,12 10.8,12 7.5,14.7" fill="#ffff00" stroke="#000" stroke-width="2" stroke-linejoin="miter" stroke-miterlimit="1.5" /><polygon points="7.5,14.7 10.8,12 10.8,19 7.5,21.7" fill="#9a9a00" stroke="#000" stroke-width="2" stroke-linejoin="miter" stroke-miterlimit="1.5" /><rect x="-1" y="14.7" width="8.5" height="7" fill="#ffffa8" stroke="#000" stroke-width="2"/><polygon points="14,14.7 17.3,12 25.8,12 22.5,14.7" fill="#ff0000" stroke="#000" stroke-width="2" stroke-linejoin="miter" stroke-miterlimit="1.5" /><polygon points="22.5,14.7 25.8,12 25.8,19 22.5,21.7" fill="#900000" stroke="#000" stroke-width="2" stroke-linejoin="miter" stroke-miterlimit="1.5" /><rect x="14" y="14.7" width="8.5" height="7" fill="#ff9090" stroke="#000" stroke-width="2"/><polyline points="13.4,0 25,9.8" fill="none" stroke="#ff0000" stroke-width="2.6"/><polyline points="13.4,9.8 25,0" fill="none" stroke="#ff0000" stroke-width="2.6"/></g><g transform="translate(1499,1009)"><polygon points="-1.1,14.2 2.2,11.5 10.7,11.5 7.4,14.2" fill="#ff0000" stroke="#000" stroke-width="2" stroke-linejoin="miter" stroke-miterlimit="1.5" /><polygon points="7.4,14.2 10.7,11.5 10.7,19 7.4,21.7" fill="#900000" stroke="#000" stroke-width="2" stroke-linejoin="miter" stroke-miterlimit="1.5" /><rect x="-1.1" y="14.2" width="8.5" height="7.5" fill="#ff9090" stroke="#000" stroke-width="2"/><polygon points="15,14.2 18.3,11.5 26.8,11.5 23.5,14.2" fill="#ff0000" stroke="#000" stroke-width="2" stroke-linejoin="miter" stroke-miterlimit="1.5" /><polygon points="23.5,14.2 26.8,11.5 26.8,19 23.5,21.7" fill="#900000" stroke="#000" stroke-width="2" stroke-linejoin="miter" stroke-miterlimit="1.5" /><rect x="15" y="14.2" width="8.5" height="7.5" fill="#ff9090" stroke="#000" stroke-width="2"/><polyline points="13.4,0 25.5,9.8" fill="none" stroke="#ff0000" stroke-width="2.6"/><polyline points="13.4,9.8 25.5,0" fill="none" stroke="#ff0000" stroke-width="2.6"/></g><rect x="1589" y="1001" width="317" height="39" rx="4" fill="url(#tbgrad)"/><rect x="1591" y="1038" width="313" height="2" fill="#78a6e2"/><rect x="1595" y="1011" width="3.5" height="2.8" fill="#ffffff"/><rect x="1594" y="1010" width="3.5" height="2.8" fill="#6e9ddc"/><rect x="1595" y="1017.2" width="3.5" height="2.8" fill="#ffffff"/><rect x="1594" y="1016.2" width="3.5" height="2.8" fill="#6e9ddc"/><rect x="1595" y="1023.4" width="3.5" height="2.8" fill="#ffffff"/><rect x="1594" y="1022.4" width="3.5" height="2.8" fill="#6e9ddc"/><rect x="1595" y="1029.6" width="3.5" height="2.8" fill="#ffffff"/><rect x="1594" y="1028.6" width="3.5" height="2.8" fill="#6e9ddc"/><g transform="translate(1611,1009)"><path d="M2 12 C0 9 2 6 6 6 L10 6 L10 14 L4 16 Z" fill="#00e8f0" stroke="#000" stroke-width="1.8"/><polygon points="14,5.5 17,3 26,3 23,5.5" fill="#00c0d0" stroke="#000" stroke-width="2" stroke-linejoin="miter" stroke-miterlimit="1.5" /><polygon points="23,5.5 26,3 26,10 23,12.5" fill="#008090" stroke="#000" stroke-width="2" stroke-linejoin="miter" stroke-miterlimit="1.5" /><rect x="14" y="5.5" width="9" height="7" fill="#00e8f0" stroke="#000" stroke-width="2"/><path d="M8 3 C4 6 5 14 9 15 C13 16 15 13 15 10" fill="none" stroke="#000" stroke-width="5"/><path d="M8 3 C4 6 5 14 9 15 C13 16 15 13 15 10" fill="none" stroke="#ffff00" stroke-width="2.5"/><rect x="15" y="15" width="7" height="7" fill="#ffffa8" stroke="#000" stroke-width="1.8"/></g><g transform="translate(1651.7,1009)"><path d="M1 6 L7 1 L9 1 L5 13 Z" fill="#00e8f0" stroke="#000" stroke-width="1.8"/><path d="M5 2 C13 0 17 4 15 12 L11 16" fill="none" stroke="#000" stroke-width="5"/><path d="M5 2 C13 0 17 4 15 12 L11 16" fill="none" stroke="#ffff00" stroke-width="2.5"/><polyline points="12,6 21,6 24,10 24,22" fill="none" stroke="#909090" stroke-width="1.8"/><rect x="13" y="10" width="10" height="6" fill="none" stroke="#909090" stroke-width="1.8"/><rect x="14" y="15" width="9" height="7" fill="#ffffa8" stroke="#000" stroke-width="2"/></g><g transform="translate(1692,1009)"><polygon points="0,6 4,1 9,1 5,9 5,13" fill="none" stroke="#909090" stroke-width="1.8" stroke-linejoin="miter" stroke-miterlimit="1.5" /><polyline points="5,1 15,1 20,7" fill="none" stroke="#909090" stroke-width="1.8"/><polyline points="10,1 15,7 15,21 22,21 22,13" fill="none" stroke="#909090" stroke-width="1.8"/><polygon points="9,8 12,5 22,5 19,8" fill="#ff0000" stroke="#000" stroke-width="2" stroke-linejoin="miter" stroke-miterlimit="1.5" /><polygon points="19,8 22,5 22,12 19,15" fill="#900000" stroke="#000" stroke-width="2" stroke-linejoin="miter" stroke-miterlimit="1.5" /><rect x="9" y="8" width="10" height="7" fill="#ff9090" stroke="#000" stroke-width="2"/></g><g transform="translate(1731,1009)"><polygon points="0,6 4,1 9,1 5,9 5,13" fill="none" stroke="#909090" stroke-width="1.8" stroke-linejoin="miter" stroke-miterlimit="1.5" /><polygon points="0,6 4,1 5,1 1.5,10" fill="#00e8f0" stroke="#000" stroke-width="1.5" stroke-linejoin="miter" stroke-miterlimit="1.5" /><polyline points="5,1 15,1 20,7" fill="none" stroke="#909090" stroke-width="1.8"/><polyline points="10,1 15,7 15,21 22,21 22,13" fill="none" stroke="#909090" stroke-width="1.8"/><polygon points="9,8 12,5 22,5 19,8" fill="#ff0000" stroke="#000" stroke-width="2" stroke-linejoin="miter" stroke-miterlimit="1.5" /><polygon points="19,8 22,5 22,12 19,15" fill="#900000" stroke="#000" stroke-width="2" stroke-linejoin="miter" stroke-miterlimit="1.5" /><rect x="9" y="8" width="10" height="7" fill="#ff9090" stroke="#000" stroke-width="2"/></g><rect x="1766.95" y="1011" width="1.5" height="21" fill="#7aa2dc"/><rect x="1768.45" y="1011" width="1.5" height="21" fill="#ffffff"/><g transform="translate(1783.6,1009)"><polygon points="0,6 4,1 9,1 5,9 5,13" fill="none" stroke="#909090" stroke-width="1.8" stroke-linejoin="miter" stroke-miterlimit="1.5" /><polygon points="0,6 4,1 5,1 1.5,10" fill="#ff0000" stroke="#000" stroke-width="1.5" stroke-linejoin="miter" stroke-miterlimit="1.5" /><polyline points="5,1 15,1 20,7" fill="none" stroke="#909090" stroke-width="1.8"/><polyline points="10,1 15,7 15,21 22,21 22,13" fill="none" stroke="#909090" stroke-width="1.8"/><polygon points="9,8 12,5 22,5 19,8" fill="#ff0000" stroke="#000" stroke-width="2" stroke-linejoin="miter" stroke-miterlimit="1.5" /><polygon points="19,8 22,5 22,12 19,15" fill="#900000" stroke="#000" stroke-width="2" stroke-linejoin="miter" stroke-miterlimit="1.5" /><rect x="9" y="8" width="10" height="7" fill="#ff9090" stroke="#000" stroke-width="2"/></g><g transform="translate(1822.5,1009)"><polygon points="0,6 4,1 9,1 5,9 5,13" fill="none" stroke="#909090" stroke-width="1.8" stroke-linejoin="miter" stroke-miterlimit="1.5" /><polygon points="0,6 4,1 5,1 1.5,10" fill="#ff0000" stroke="#000" stroke-width="1.5" stroke-linejoin="miter" stroke-miterlimit="1.5" /><polyline points="5,1 15,1 20,7" fill="none" stroke="#909090" stroke-width="1.8"/><polyline points="10,1 15,7 15,21 22,21 22,13" fill="none" stroke="#909090" stroke-width="1.8"/><polygon points="9,8 12,5 22,5 19,8" fill="#ff0000" stroke="#000" stroke-width="2" stroke-linejoin="miter" stroke-miterlimit="1.5" /><polygon points="19,8 22,5 22,12 19,15" fill="#900000" stroke="#000" stroke-width="2" stroke-linejoin="miter" stroke-miterlimit="1.5" /><rect x="9" y="8" width="10" height="7" fill="#ff9090" stroke="#000" stroke-width="2"/><polyline points="9,16 -3,16" fill="none" stroke="#ff0000" stroke-width="1.6"/><polygon points="-3,16 2.20436e-16,17.8 -2.20436e-16,14.2" fill="#ff0000" stroke="#ff0000" stroke-width="0.5" stroke-linejoin="miter" stroke-miterlimit="1.5" /><polyline points="3,18 3,24" fill="none" stroke="#ff0000" stroke-width="1.4"/><polyline points="0,21 6,21" fill="none" stroke="#ff0000" stroke-width="1.4"/></g><rect x="1858.25" y="1011" width="1.5" height="21" fill="#7aa2dc"/><rect x="1859.75" y="1011" width="1.5" height="21" fill="#ffffff"/><g transform="translate(1873.7,1009)"><text x="-1" y="23.5" font-family="Liberation Sans" font-size="20" font-weight="bold" fill="#ff0000">?</text><polygon points="7,3.5 10,0.5 20,0.5 17,3.5" fill="#ffff00" stroke="#000" stroke-width="2" stroke-linejoin="miter" stroke-miterlimit="1.5" /><polygon points="17,3.5 20,0.5 20,8.5 17,11.5" fill="#9a9a00" stroke="#000" stroke-width="2" stroke-linejoin="miter" stroke-miterlimit="1.5" /><rect x="7" y="3.5" width="10" height="8" fill="#ffff00" stroke="#000" stroke-width="2"/><polygon points="12,9 15,6 24,6 21,9" fill="#00c0d0" stroke="#000" stroke-width="2" stroke-linejoin="miter" stroke-miterlimit="1.5" /><polygon points="21,9 24,6 24,14 21,17" fill="#008090" stroke="#000" stroke-width="2" stroke-linejoin="miter" stroke-miterlimit="1.5" /><rect x="12" y="9" width="9" height="8" fill="#00e8f0" stroke="#000" stroke-width="2"/><rect x="13" y="15" width="9" height="7" fill="#ffffa8" stroke="#000" stroke-width="2"/></g>
<rect x="33" y="1039.3" width="2333" height="1.7" fill="#6e9cdc"/>
<rect x="33" y="1041" width="2333" height="2" fill="#ffffff" opacity="0.9"/>
<rect x="33" y="1043" width="2333" height="37" fill="url(#stgrad)"/>
<rect x="33" y="1080" width="2333" height="2" fill="#1c2430"/>
<rect x="2261" y="1046" width="1.5" height="31" fill="#8aaedc"/><rect x="2262" y="1046" width="1.5" height="31" fill="#f4f8ff"/>
<rect x="2297" y="1046" width="1.5" height="31" fill="#8aaedc"/><rect x="2298" y="1046" width="1.5" height="31" fill="#f4f8ff"/>
<rect x="2363" y="1046" width="1.5" height="31" fill="#8aaedc"/><rect x="2364" y="1046" width="1.5" height="31" fill="#f4f8ff"/>
<path d="M2335.5 45.5 L2349.5 55 M2349.5 45.5 L2335.5 55" stroke="#7088a8" stroke-width="3.6"/><rect x="2333" y="56" width="19" height="1.2" fill="#ffffff" opacity="0.8"/>
<rect x="34" y="5" width="25" height="23" fill="#58d0f8" stroke="#000" stroke-width="2"/>
<rect x="35" y="24" width="23" height="3" fill="#1a50a0"/>
<path d="M51 7 L53 22 L55 7" fill="none" stroke="#000" stroke-width="1.5"/>
<rect x="2185" y="0" width="48" height="27" rx="3" fill="url(#minbtn)" stroke="#3a4450" stroke-width="1"/>
<rect x="2233" y="0" width="46" height="27" fill="url(#minbtn)" stroke="#3a4450" stroke-width="1"/>
<rect x="2279" y="0" width="82" height="27" rx="3" fill="url(#closebtn)" stroke="#5a1a10" stroke-width="1"/>
<rect x="2202" y="13" width="15" height="4" fill="#fff" stroke="#3a4450" stroke-width="1"/>
<rect x="2250" y="6" width="14" height="12" fill="none" stroke="#fff" stroke-width="2.5"/><rect x="2246" y="10" width="14" height="12" fill="#8a98a8" stroke="#fff" stroke-width="2.5"/>
<path d="M2312 5 L2328 20 M2328 5 L2312 20" stroke="#3a3a48" stroke-width="6"/><path d="M2312 5 L2328 20 M2328 5 L2312 20" stroke="#fff" stroke-width="3.5"/>
<defs><clipPath id="orbclip"><rect x="0" y="725" width="33" height="50"/></clipPath></defs>
<g clip-path="url(#orbclip)">
<rect x="0" y="730" width="33" height="38" fill="#4c5868"/>
<circle cx="26" cy="748.3" r="17.6" fill="url(#orb)" stroke="#c8d8e8" stroke-width="0.8"/>
<path d="M18.5 737.5 C21 736.5 25 736.5 28.5 738 L27 746.5 C24 745 21 745 17.5 746 Z" fill="#f06a20"/><path d="M28.5 739 C30 740 32 740 34 739 L33 748 C31 748.5 29 748 27.2 747.2 Z" fill="#90c840"/><path d="M17 747.5 C20 746.5 23 746.5 26.5 748 L25.5 756 C22 754.5 19 754.5 15.5 755.5 Z" fill="#2a98e8"/><path d="M26.8 749 C29 750 31 750.5 33.5 749.5 L33 758 C30.5 758.8 28 758.5 25.5 757.5 Z" fill="#fcc020"/>
<ellipse cx="26" cy="738" rx="13" ry="6" fill="#ffffff" opacity="0.22"/>
</g>
</svg>
<div class="t" style="left:67.5px;top:8px;font-size:18.5px;letter-spacing:1.02px;color:#101010;">NONAME 1* - VariCAD 2012-1.07</div>
<div class="t menu" style="left:49.5px;letter-spacing:1.1px">Soubor</div>
<div class="t menu" style="left:140px;letter-spacing:0.92px">Úpravy</div>
<div class="t menu" style="left:228.5px;letter-spacing:1.16px">Pohled</div>
<div class="t menu" style="left:317.5px;letter-spacing:1.45px">Objekty</div>
<div class="t menu" style="left:413.5px;letter-spacing:1.5px">Knihovny</div>
<div class="t menu" style="left:523.5px;letter-spacing:0.95px">Nastavení</div>
<div class="t menu" style="left:637.5px;letter-spacing:1.47px">Okna</div>
<div class="t menu" style="left:712px;letter-spacing:1.67px">Help</div>
<div class="t" style="left:56px;top:1010px;font-size:19px;letter-spacing:0px;color:#3a2c7c;">Příkaz:</div>
<div class="t" style="left:47px;top:1051px;font-size:19.5px;letter-spacing:0px;color:#2a46a0;">Zadej příkaz</div>
<svg class="abs" style="left:2300px;top:1045px" width="60" height="30"><text x="15.5" y="21.8" font-family="Liberation Sans" font-size="17" textLength="36.5" lengthAdjust="spacingAndGlyphs" fill="#3a2a90">mm</text></svg>
<svg class="abs" style="left:0;top:0" width="300" height="1000"><path d="M145 977.5 L160 992.5 M160 977.5 L145 992.5" stroke="#ff0000" stroke-width="3.2" fill="none"/><path d="M172 977.5 L180 985.5 L188 977.5 M180 985 L180 993.5" stroke="#0000ff" stroke-width="3.2" fill="none"/><path d="M200 976.5 L215.5 976.5 L201.5 992.5 M200 993.5 L215 993.5" stroke="#008000" stroke-width="3.2" fill="none"/></svg>
</body></html>
